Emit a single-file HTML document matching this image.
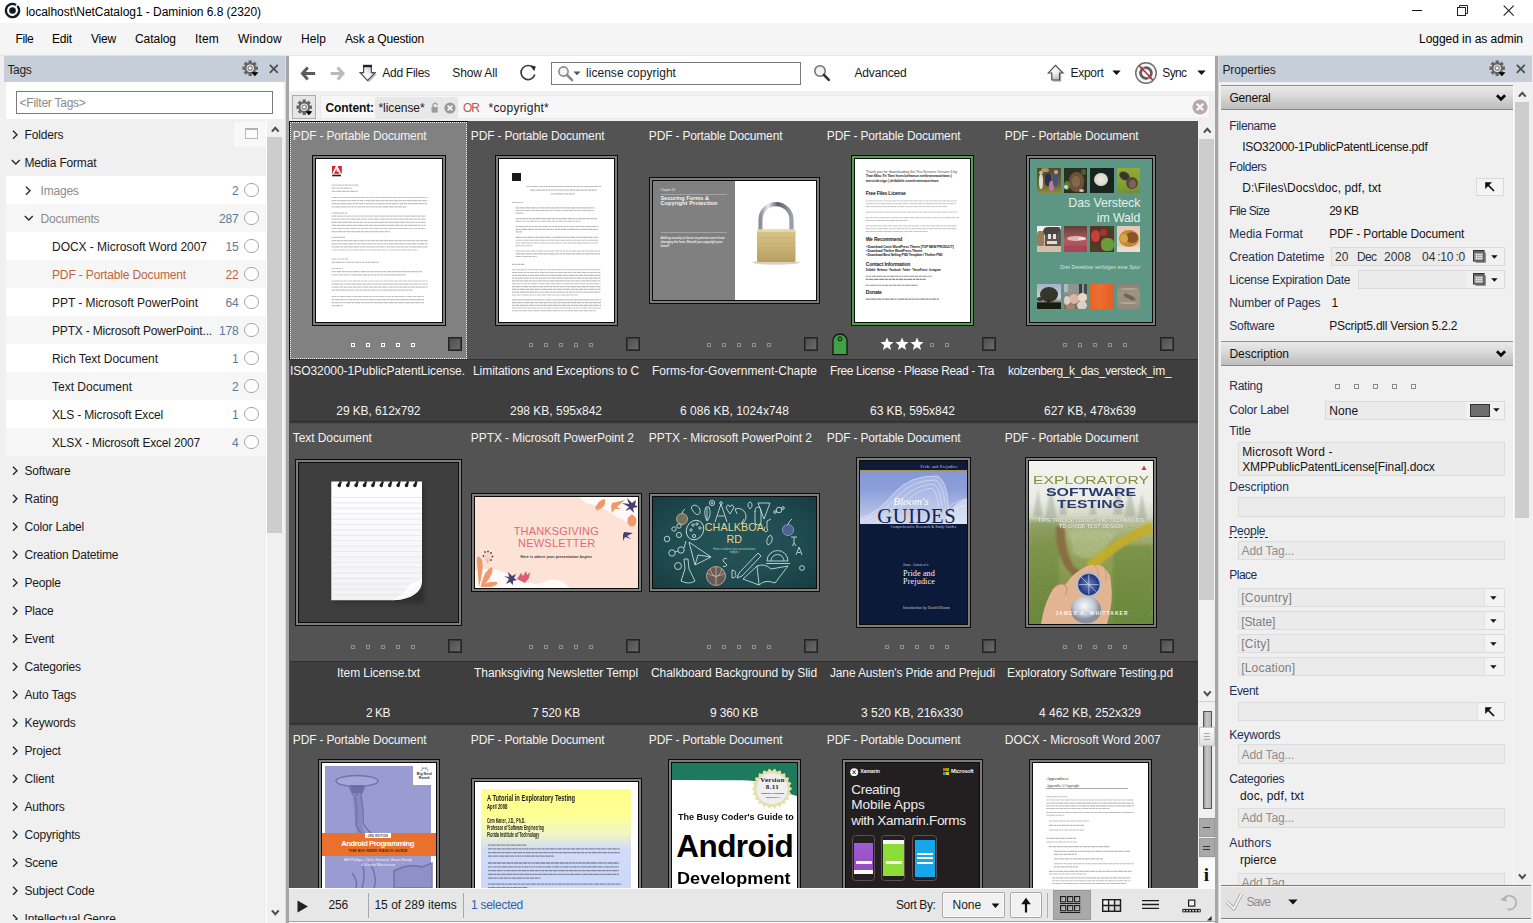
<!DOCTYPE html><html><head><meta charset="utf-8"><title>Daminion</title><style>

html,body{margin:0;padding:0;}
body{width:1533px;height:923px;overflow:hidden;background:#f0f0f0;font-family:"Liberation Sans",sans-serif;font-size:12px;position:relative;}
div,span,svg{position:absolute;box-sizing:border-box;}
.t{white-space:pre;}
.clip{overflow:hidden;}

</style></head><body>
<div style="left:0px;top:0px;width:1533px;height:23px;background:#ffffff;"></div>
<svg style="left:3.4px;top:1.3px;" width="19" height="19" viewBox="0 0 19 19"><path d="M14.91 5.71A6.6 6.6 0 1 1 12.29 3.52" fill="none" stroke="#0f1b28" stroke-width="2.3" stroke-linecap="round"/><circle cx="9.5" cy="9.5" r="3.3" fill="#0f1b28"/></svg>
<span class="t" style="left:26.00px;top:6.00px;font-size:12px;line-height:12px;color:#000;letter-spacing:-0.042px;">localhost\NetCatalog1 - Daminion 6.8 (2320)</span>
<div style="left:1412px;top:10px;width:10px;height:1px;background:#111;"></div>
<svg style="left:1456.5px;top:4.5px;" width="12" height="12" viewBox="0 0 12 12"><rect x="0.5" y="2.5" width="8" height="8" fill="none" stroke="#222" stroke-width="1"/><path d="M2.5 2.5V0.5H10.5V8.5H8.5" fill="none" stroke="#222" stroke-width="1"/></svg>
<svg style="left:1502.5px;top:4.5px;" width="12" height="12" viewBox="0 0 12 12"><path d="M0.7 0.7L10.7 10.7M10.7 0.7L0.7 10.7" stroke="#222" stroke-width="1.1" fill="none"/></svg>
<div style="left:0px;top:23px;width:1533px;height:33px;background:#f5f5f5;"></div>
<div style="left:0px;top:53px;width:1533px;height:2px;background:#f3f3f3;"></div>
<div style="left:0px;top:55px;width:1533px;height:1px;background:#e8e8e8;"></div>
<span class="t" style="left:15.40px;top:33.00px;font-size:12px;line-height:12px;color:#000;letter-spacing:-0.336px;">File</span>
<span class="t" style="left:52.00px;top:33.00px;font-size:12px;line-height:12px;color:#000;letter-spacing:-0.172px;">Edit</span>
<span class="t" style="left:91.00px;top:33.00px;font-size:12px;line-height:12px;color:#000;letter-spacing:-0.199px;">View</span>
<span class="t" style="left:135.00px;top:33.00px;font-size:12px;line-height:12px;color:#000;letter-spacing:-0.054px;">Catalog</span>
<span class="t" style="left:195.00px;top:33.00px;font-size:12px;line-height:12px;color:#000;letter-spacing:0.164px;">Item</span>
<span class="t" style="left:238.00px;top:33.00px;font-size:12px;line-height:12px;color:#000;letter-spacing:0.219px;">Window</span>
<span class="t" style="left:301.00px;top:33.00px;font-size:12px;line-height:12px;color:#000;letter-spacing:0.078px;">Help</span>
<span class="t" style="left:345.00px;top:33.00px;font-size:12px;line-height:12px;color:#000;letter-spacing:-0.170px;">Ask a Question</span>
<span class="t" style="left:1419.00px;top:33.00px;font-size:12px;line-height:12px;color:#000;letter-spacing:-0.042px;">Logged in as admin</span>
<div style="left:0px;top:56px;width:289px;height:867px;background:#f0f0f0;"></div>
<div style="left:4px;top:55px;width:281px;height:1px;background:#dfe3e9;"></div>
<div style="left:4px;top:56px;width:281px;height:26px;background:#c5ced9;"></div>
<span class="t" style="left:7.40px;top:64.00px;font-size:12px;line-height:12px;color:#1e1e1e;letter-spacing:-0.340px;">Tags</span>
<svg style="left:242px;top:59.5px;" width="17" height="17" viewBox="0 0 17 17"><path d="M6.55 3.06L6.51 0.48L9.89 0.48L9.85 3.06L10.67 3.40L12.47 1.55L14.85 3.93L13.00 5.73L13.34 6.55L15.92 6.51L15.92 9.89L13.34 9.85L13.00 10.67L14.85 12.47L12.47 14.85L10.67 13.00L9.85 13.34L9.89 15.92L6.51 15.92L6.55 13.34L5.73 13.00L3.93 14.85L1.55 12.47L3.40 10.67L3.06 9.85L0.48 9.89L0.48 6.51L3.06 6.55L3.40 5.73L1.55 3.93L3.93 1.55L5.73 3.40Z" fill="#666"/><circle cx="8.2" cy="8.2" r="5.7" fill="#666"/><circle cx="8.2" cy="8.2" r="3.7" fill="#eeeeee"/><circle cx="8.2" cy="8.2" r="2.7" fill="#8a8a8a"/><circle cx="8.2" cy="8.2" r="1.4" fill="#f8f8f8"/><path d="M9.3 12.3h7.2l-3.6 3.9z" fill="#000"/></svg>
<svg style="left:269px;top:64px;" width="10" height="10" viewBox="0 0 10 10"><path d="M0.8 0.8L8.8 8.8M8.8 0.8L0.8 8.8" stroke="#4c4c4c" stroke-width="1.7" fill="none"/></svg>
<div style="left:6px;top:82px;width:278px;height:37px;background:#ffffff;"></div>
<div style="left:16px;top:91px;width:257px;height:23px;background:#ffffff;border:1px solid #7a7a7a;"></div>
<span class="t" style="left:19.60px;top:97.00px;font-size:12px;line-height:12px;color:#8a8a8a;letter-spacing:-0.243px;">&lt;Filter Tags&gt;</span>
<div class="clip" style="left:0px;top:119px;width:285px;height:804px;">
<div style="left:6px;top:0px;width:260px;height:804px;background:#f0f0f0;"></div>
<div style="left:6px;top:57px;width:260px;height:28px;background:#ffffff;"></div>
<div style="left:6px;top:85px;width:260px;height:28px;background:#f6f6f6;"></div>
<div style="left:6px;top:113px;width:260px;height:28px;background:#ffffff;"></div>
<div style="left:6px;top:141px;width:260px;height:28px;background:#f6f6f6;"></div>
<div style="left:6px;top:169px;width:260px;height:28px;background:#ffffff;"></div>
<div style="left:6px;top:197px;width:260px;height:28px;background:#f6f6f6;"></div>
<div style="left:6px;top:225px;width:260px;height:28px;background:#ffffff;"></div>
<div style="left:6px;top:253px;width:260px;height:28px;background:#f6f6f6;"></div>
<div style="left:6px;top:281px;width:260px;height:28px;background:#ffffff;"></div>
<div style="left:6px;top:309px;width:260px;height:28px;background:#f6f6f6;"></div>
<div style="left:234px;top:3px;width:32px;height:25px;background:#f8f8f8;"></div>
<div style="left:245px;top:9px;width:13px;height:11px;background:#fbfbfb;border:1px solid #b8b8b8;border-top:2px solid #b4b4b4;"></div>
<svg style="left:11.5px;top:11.199999999999989px;" width="6" height="10" viewBox="0 0 6 10"><path d="M1 0.8L5 4.8L1 8.8" fill="none" stroke="#2a2a2a" stroke-width="1.4"/></svg>
<span class="t" style="left:24.50px;top:10.00px;font-size:12px;line-height:12px;color:#1a1a1a;letter-spacing:-0.171px;">Folders</span>
<svg style="left:10.5px;top:40.0px;" width="10" height="6" viewBox="0 0 10 6"><path d="M0.8 1L4.8 5L8.8 1" fill="none" stroke="#2a2a2a" stroke-width="1.4"/></svg>
<span class="t" style="left:24.50px;top:38.00px;font-size:12px;line-height:12px;color:#1a1a1a;letter-spacing:-0.185px;">Media Format</span>
<svg style="left:11.5px;top:347.2px;" width="6" height="10" viewBox="0 0 6 10"><path d="M1 0.8L5 4.8L1 8.8" fill="none" stroke="#2a2a2a" stroke-width="1.4"/></svg>
<span class="t" style="left:24.50px;top:346.00px;font-size:12px;line-height:12px;color:#1a1a1a;letter-spacing:-0.178px;">Software</span>
<svg style="left:11.5px;top:375.2px;" width="6" height="10" viewBox="0 0 6 10"><path d="M1 0.8L5 4.8L1 8.8" fill="none" stroke="#2a2a2a" stroke-width="1.4"/></svg>
<span class="t" style="left:24.50px;top:374.00px;font-size:12px;line-height:12px;color:#1a1a1a;letter-spacing:-0.173px;">Rating</span>
<svg style="left:11.5px;top:403.20000000000005px;" width="6" height="10" viewBox="0 0 6 10"><path d="M1 0.8L5 4.8L1 8.8" fill="none" stroke="#2a2a2a" stroke-width="1.4"/></svg>
<span class="t" style="left:24.50px;top:402.00px;font-size:12px;line-height:12px;color:#1a1a1a;letter-spacing:-0.167px;">Color Label</span>
<svg style="left:11.5px;top:431.20000000000005px;" width="6" height="10" viewBox="0 0 6 10"><path d="M1 0.8L5 4.8L1 8.8" fill="none" stroke="#2a2a2a" stroke-width="1.4"/></svg>
<span class="t" style="left:24.50px;top:430.00px;font-size:12px;line-height:12px;color:#1a1a1a;letter-spacing:-0.171px;">Creation Datetime</span>
<svg style="left:11.5px;top:459.20000000000005px;" width="6" height="10" viewBox="0 0 6 10"><path d="M1 0.8L5 4.8L1 8.8" fill="none" stroke="#2a2a2a" stroke-width="1.4"/></svg>
<span class="t" style="left:24.50px;top:458.00px;font-size:12px;line-height:12px;color:#1a1a1a;letter-spacing:-0.187px;">People</span>
<svg style="left:11.5px;top:487.20000000000005px;" width="6" height="10" viewBox="0 0 6 10"><path d="M1 0.8L5 4.8L1 8.8" fill="none" stroke="#2a2a2a" stroke-width="1.4"/></svg>
<span class="t" style="left:24.50px;top:486.00px;font-size:12px;line-height:12px;color:#1a1a1a;letter-spacing:-0.180px;">Place</span>
<svg style="left:11.5px;top:515.2px;" width="6" height="10" viewBox="0 0 6 10"><path d="M1 0.8L5 4.8L1 8.8" fill="none" stroke="#2a2a2a" stroke-width="1.4"/></svg>
<span class="t" style="left:24.50px;top:514.00px;font-size:12px;line-height:12px;color:#1a1a1a;letter-spacing:-0.184px;">Event</span>
<svg style="left:11.5px;top:543.2px;" width="6" height="10" viewBox="0 0 6 10"><path d="M1 0.8L5 4.8L1 8.8" fill="none" stroke="#2a2a2a" stroke-width="1.4"/></svg>
<span class="t" style="left:24.50px;top:542.00px;font-size:12px;line-height:12px;color:#1a1a1a;letter-spacing:-0.174px;">Categories</span>
<svg style="left:11.5px;top:571.2px;" width="6" height="10" viewBox="0 0 6 10"><path d="M1 0.8L5 4.8L1 8.8" fill="none" stroke="#2a2a2a" stroke-width="1.4"/></svg>
<span class="t" style="left:24.50px;top:570.00px;font-size:12px;line-height:12px;color:#1a1a1a;letter-spacing:-0.177px;">Auto Tags</span>
<svg style="left:11.5px;top:599.2px;" width="6" height="10" viewBox="0 0 6 10"><path d="M1 0.8L5 4.8L1 8.8" fill="none" stroke="#2a2a2a" stroke-width="1.4"/></svg>
<span class="t" style="left:24.50px;top:598.00px;font-size:12px;line-height:12px;color:#1a1a1a;letter-spacing:-0.198px;">Keywords</span>
<svg style="left:11.5px;top:627.2px;" width="6" height="10" viewBox="0 0 6 10"><path d="M1 0.8L5 4.8L1 8.8" fill="none" stroke="#2a2a2a" stroke-width="1.4"/></svg>
<span class="t" style="left:24.50px;top:626.00px;font-size:12px;line-height:12px;color:#1a1a1a;letter-spacing:-0.160px;">Project</span>
<svg style="left:11.5px;top:655.2px;" width="6" height="10" viewBox="0 0 6 10"><path d="M1 0.8L5 4.8L1 8.8" fill="none" stroke="#2a2a2a" stroke-width="1.4"/></svg>
<span class="t" style="left:24.50px;top:654.00px;font-size:12px;line-height:12px;color:#1a1a1a;letter-spacing:-0.153px;">Client</span>
<svg style="left:11.5px;top:683.2px;" width="6" height="10" viewBox="0 0 6 10"><path d="M1 0.8L5 4.8L1 8.8" fill="none" stroke="#2a2a2a" stroke-width="1.4"/></svg>
<span class="t" style="left:24.50px;top:682.00px;font-size:12px;line-height:12px;color:#1a1a1a;letter-spacing:-0.177px;">Authors</span>
<svg style="left:11.5px;top:711.2px;" width="6" height="10" viewBox="0 0 6 10"><path d="M1 0.8L5 4.8L1 8.8" fill="none" stroke="#2a2a2a" stroke-width="1.4"/></svg>
<span class="t" style="left:24.50px;top:710.00px;font-size:12px;line-height:12px;color:#1a1a1a;letter-spacing:-0.172px;">Copyrights</span>
<svg style="left:11.5px;top:739.2px;" width="6" height="10" viewBox="0 0 6 10"><path d="M1 0.8L5 4.8L1 8.8" fill="none" stroke="#2a2a2a" stroke-width="1.4"/></svg>
<span class="t" style="left:24.50px;top:738.00px;font-size:12px;line-height:12px;color:#1a1a1a;letter-spacing:-0.204px;">Scene</span>
<svg style="left:11.5px;top:767.2px;" width="6" height="10" viewBox="0 0 6 10"><path d="M1 0.8L5 4.8L1 8.8" fill="none" stroke="#2a2a2a" stroke-width="1.4"/></svg>
<span class="t" style="left:24.50px;top:766.00px;font-size:12px;line-height:12px;color:#1a1a1a;letter-spacing:-0.180px;">Subject Code</span>
<svg style="left:11.5px;top:795.2px;" width="6" height="10" viewBox="0 0 6 10"><path d="M1 0.8L5 4.8L1 8.8" fill="none" stroke="#2a2a2a" stroke-width="1.4"/></svg>
<span class="t" style="left:24.50px;top:794.00px;font-size:12px;line-height:12px;color:#1a1a1a;letter-spacing:-0.157px;">Intellectual Genre</span>
<svg style="left:25.0px;top:67.19999999999999px;" width="6" height="10" viewBox="0 0 6 10"><path d="M1 0.8L5 4.8L1 8.8" fill="none" stroke="#2a2a2a" stroke-width="1.4"/></svg>
<span class="t" style="left:40.50px;top:66.00px;font-size:12px;line-height:12px;color:#8c8c8c;letter-spacing:-0.197px;">Images</span>
<span class="t" style="left:232.01px;top:66.00px;font-size:12px;line-height:12px;color:#5d7a96;letter-spacing:-0.201px;">2</span>
<svg style="left:24.0px;top:96.0px;" width="10" height="6" viewBox="0 0 10 6"><path d="M0.8 1L4.8 5L8.8 1" fill="none" stroke="#2a2a2a" stroke-width="1.4"/></svg>
<span class="t" style="left:40.50px;top:94.00px;font-size:12px;line-height:12px;color:#8c8c8c;letter-spacing:-0.202px;">Documents</span>
<span class="t" style="left:219.07px;top:94.00px;font-size:12px;line-height:12px;color:#5d7a96;letter-spacing:-0.200px;">287</span>
<span class="t" style="left:52.00px;top:122.00px;font-size:12px;line-height:12px;color:#1a1a1a;letter-spacing:-0.032px;">DOCX - Microsoft Word 2007</span>
<span class="t" style="left:225.54px;top:122.00px;font-size:12px;line-height:12px;color:#5d7a96;letter-spacing:-0.200px;">15</span>
<span class="t" style="left:52.00px;top:150.00px;font-size:12px;line-height:12px;color:#c0643c;letter-spacing:-0.147px;">PDF - Portable Document</span>
<span class="t" style="left:225.54px;top:150.00px;font-size:12px;line-height:12px;color:#c0643c;letter-spacing:-0.200px;">22</span>
<span class="t" style="left:52.00px;top:178.00px;font-size:12px;line-height:12px;color:#1a1a1a;letter-spacing:-0.045px;">PPT - Microsoft PowerPoint</span>
<span class="t" style="left:225.54px;top:178.00px;font-size:12px;line-height:12px;color:#5d7a96;letter-spacing:-0.200px;">64</span>
<span class="t" style="left:52.00px;top:206.00px;font-size:12px;line-height:12px;color:#1a1a1a;letter-spacing:-0.180px;">PPTX - Microsoft PowerPoint...</span>
<span class="t" style="left:219.07px;top:206.00px;font-size:12px;line-height:12px;color:#5d7a96;letter-spacing:-0.200px;">178</span>
<span class="t" style="left:52.00px;top:234.00px;font-size:12px;line-height:12px;color:#1a1a1a;letter-spacing:-0.064px;">Rich Text Document</span>
<span class="t" style="left:232.01px;top:234.00px;font-size:12px;line-height:12px;color:#5d7a96;letter-spacing:-0.201px;">1</span>
<span class="t" style="left:52.00px;top:262.00px;font-size:12px;line-height:12px;color:#1a1a1a;letter-spacing:-0.004px;">Text Document</span>
<span class="t" style="left:232.01px;top:262.00px;font-size:12px;line-height:12px;color:#5d7a96;letter-spacing:-0.201px;">2</span>
<span class="t" style="left:52.00px;top:290.00px;font-size:12px;line-height:12px;color:#1a1a1a;letter-spacing:-0.176px;">XLS - Microsoft Excel</span>
<span class="t" style="left:232.01px;top:290.00px;font-size:12px;line-height:12px;color:#5d7a96;letter-spacing:-0.201px;">1</span>
<span class="t" style="left:52.00px;top:318.00px;font-size:12px;line-height:12px;color:#1a1a1a;letter-spacing:-0.175px;">XLSX - Microsoft Excel 2007</span>
<span class="t" style="left:232.01px;top:318.00px;font-size:12px;line-height:12px;color:#5d7a96;letter-spacing:-0.201px;">4</span>
<div style="left:244.3px;top:63.5px;width:14.5px;height:14.5px;border:1px solid #a8a8a8;border-radius:50%;background:#fdfdfd;"></div>
<div style="left:244.3px;top:91.5px;width:14.5px;height:14.5px;border:1px solid #a8a8a8;border-radius:50%;background:#fdfdfd;"></div>
<div style="left:244.3px;top:119.5px;width:14.5px;height:14.5px;border:1px solid #a8a8a8;border-radius:50%;background:#fdfdfd;"></div>
<div style="left:244.3px;top:147.5px;width:14.5px;height:14.5px;border:1px solid #a8a8a8;border-radius:50%;background:#fdfdfd;"></div>
<div style="left:244.3px;top:175.5px;width:14.5px;height:14.5px;border:1px solid #a8a8a8;border-radius:50%;background:#fdfdfd;"></div>
<div style="left:244.3px;top:203.5px;width:14.5px;height:14.5px;border:1px solid #a8a8a8;border-radius:50%;background:#fdfdfd;"></div>
<div style="left:244.3px;top:231.5px;width:14.5px;height:14.5px;border:1px solid #a8a8a8;border-radius:50%;background:#fdfdfd;"></div>
<div style="left:244.3px;top:259.5px;width:14.5px;height:14.5px;border:1px solid #a8a8a8;border-radius:50%;background:#fdfdfd;"></div>
<div style="left:244.3px;top:287.5px;width:14.5px;height:14.5px;border:1px solid #a8a8a8;border-radius:50%;background:#fdfdfd;"></div>
<div style="left:244.3px;top:315.5px;width:14.5px;height:14.5px;border:1px solid #a8a8a8;border-radius:50%;background:#fdfdfd;"></div>
</div>
<div style="left:0px;top:920px;width:266px;height:3px;background:#f0f0f0;"></div>
<div style="left:266px;top:119px;width:1px;height:804px;background:#ffffff;"></div>
<div style="left:267px;top:119px;width:18px;height:804px;background:#f0f0f0;"></div>
<div style="left:267px;top:137px;width:15px;height:396px;background:#cdcdcd;"></div>
<svg style="left:270.5px;top:125.5px;" width="9" height="7" viewBox="0 0 9 7"><path d="M0.9 5.6L4.3 1.8L7.7 5.6" fill="none" stroke="#4c4c4c" stroke-width="2"/></svg>
<svg style="left:270.5px;top:908.5px;" width="9" height="7" viewBox="0 0 9 7"><path d="M0.9 1.4L4.3 5.2L7.7 1.4" fill="none" stroke="#4c4c4c" stroke-width="2"/></svg>
<div style="left:285px;top:56px;width:4px;height:867px;background:#a6a6a6;"></div>
<div style="left:285px;top:56px;width:1px;height:867px;background:#dcdcdc;"></div>
<div style="left:289px;top:56px;width:926px;height:35px;background:#ffffff;"></div>
<svg style="left:300px;top:66px;" width="16" height="15" viewBox="0 0 16 15"><path d="M7.8 1.6L2.4 7.5L7.8 13.4M2.6 7.5H15.2" fill="none" stroke="#5c5c5c" stroke-width="3"/></svg>
<svg style="left:329.5px;top:66px;" width="16" height="15" viewBox="0 0 16 15"><path d="M7.6 1.6L13 7.5L7.6 13.4M12.8 7.5H0.6" fill="none" stroke="#bababa" stroke-width="3"/></svg>
<svg style="left:359px;top:64px;" width="18" height="19" viewBox="0 0 18 19"><defs><linearGradient id="af" x1="1" y1="0" x2="0.2" y2="1"><stop offset="0" stop-color="#b4b4b4"/><stop offset="0.55" stop-color="#f4f4f4"/><stop offset="1" stop-color="#ffffff"/></linearGradient></defs><path d="M9.6 17.6L17 9.6" stroke="#bbb" stroke-width="1.6" fill="none"/><path d="M5 1.8H12.4V8.6H16L8.6 16.6L1.2 8.6H4.6V1.8Z" fill="url(#af)" stroke="#4a4a4a" stroke-width="1.2"/><rect x="4" y="0.8" width="9" height="2.4" fill="#222"/></svg>
<span class="t" style="left:382.30px;top:67.00px;font-size:12px;line-height:12px;color:#1a1a1a;letter-spacing:-0.281px;">Add Files</span>
<span class="t" style="left:452.30px;top:67.00px;font-size:12px;line-height:12px;color:#1a1a1a;letter-spacing:-0.129px;">Show All</span>
<svg style="left:519px;top:63px;" width="19" height="19" viewBox="0 0 19 19"><path d="M14.6 5.2A7 7 0 1 0 15.8 11.5" fill="none" stroke="#3c3c3c" stroke-width="1.7"/><path d="M11.2 2.2L16.8 3.4L15.2 8.2Z" fill="#2a2a2a"/></svg>
<div style="left:551px;top:62px;width:250px;height:23px;background:#ffffff;border:1px solid #7a7a7a;"></div>
<svg style="left:557px;top:65px;" width="26" height="17" viewBox="0 0 26 17"><circle cx="6.5" cy="6.5" r="4.6" fill="#f4f4f4" stroke="#8a8a8a" stroke-width="1.6"/><path d="M10 10L15 15" stroke="#8a8a8a" stroke-width="2.6" stroke-linecap="round"/><path d="M16.5 6.5h7l-3.5 3.8z" fill="#555"/></svg>
<span class="t" style="left:586.00px;top:67.00px;font-size:12px;line-height:12px;color:#1a1a1a;letter-spacing:0.036px;">license copyright</span>
<svg style="left:813px;top:64px;" width="18" height="18" viewBox="0 0 18 18"><circle cx="7" cy="7" r="5.2" fill="#f2f2f2" stroke="#6e6e6e" stroke-width="1.5"/><path d="M11 11L15.8 15.8" stroke="#333" stroke-width="2.6" stroke-linecap="round"/></svg>
<span class="t" style="left:854.50px;top:67.00px;font-size:12px;line-height:12px;color:#1a1a1a;letter-spacing:-0.172px;">Advanced</span>
<svg style="left:1047px;top:64px;" width="19" height="19" viewBox="0 0 19 19"><defs><linearGradient id="ex" x1="0.3" y1="0" x2="0.8" y2="1"><stop offset="0" stop-color="#ffffff"/><stop offset="0.5" stop-color="#f0f0f0"/><stop offset="1" stop-color="#a8a8a8"/></linearGradient></defs><path d="M13.6 9.8V17H6" stroke="#bbb" stroke-width="1.4" fill="none"/><path d="M8.5 1.4L16 9H12.6V16H4.8V9H1.2Z" fill="url(#ex)" stroke="#4a4a4a" stroke-width="1.2"/></svg>
<span class="t" style="left:1070.50px;top:67.00px;font-size:12px;line-height:12px;color:#1a1a1a;letter-spacing:-0.281px;">Export</span>
<svg style="left:1112px;top:70px;" width="9" height="6" viewBox="0 0 9 6"><path d="M0.3 0.5h8.4L4.5 5z" fill="#111"/></svg>
<svg style="left:1134px;top:61px;" width="24" height="24" viewBox="0 0 24 24"><circle cx="12" cy="12" r="10.3" fill="#f6f6f6" stroke="#6e6e6e" stroke-width="1.4"/><path d="M10.19 7.02A5.3 5.3 0 0 1 16.06 15.41" fill="none" stroke="#5c5c5c" stroke-width="2.7"/><path d="M13.81 16.98A5.3 5.3 0 0 1 7.94 8.59" fill="none" stroke="#5c5c5c" stroke-width="2.7"/><path d="M14.39 17.9L18.2 16.95L14.0 13.6Z M9.61 6.1L5.8 7.05L10.0 10.4Z" fill="#5c5c5c"/><path d="M5.2 4.6L19 19.2" stroke="#d61f3c" stroke-width="1.5"/></svg>
<span class="t" style="left:1162.30px;top:67.00px;font-size:12px;line-height:12px;color:#1a1a1a;letter-spacing:-0.672px;">Sync</span>
<svg style="left:1197px;top:70px;" width="9" height="6" viewBox="0 0 9 6"><path d="M0.3 0.5h8.4L4.5 5z" fill="#111"/></svg>
<div style="left:289px;top:91px;width:926px;height:30px;background:#f0f0f0;"></div>
<div style="left:292px;top:95px;width:24px;height:24px;background:#e6e6e6;border:1px solid #adadad;"></div>
<svg style="left:295.7px;top:98.9px;" width="17" height="17" viewBox="0 0 17 17"><path d="M6.55 3.06L6.51 0.48L9.89 0.48L9.85 3.06L10.67 3.40L12.47 1.55L14.85 3.93L13.00 5.73L13.34 6.55L15.92 6.51L15.92 9.89L13.34 9.85L13.00 10.67L14.85 12.47L12.47 14.85L10.67 13.00L9.85 13.34L9.89 15.92L6.51 15.92L6.55 13.34L5.73 13.00L3.93 14.85L1.55 12.47L3.40 10.67L3.06 9.85L0.48 9.89L0.48 6.51L3.06 6.55L3.40 5.73L1.55 3.93L3.93 1.55L5.73 3.40Z" fill="#666"/><circle cx="8.2" cy="8.2" r="5.7" fill="#666"/><circle cx="8.2" cy="8.2" r="3.7" fill="#eeeeee"/><circle cx="8.2" cy="8.2" r="2.7" fill="#8a8a8a"/><circle cx="8.2" cy="8.2" r="1.4" fill="#f8f8f8"/><path d="M9.3 12.3h7.2l-3.6 3.9z" fill="#000"/></svg>
<div style="left:320px;top:95px;width:890px;height:24px;background:#f7f7f7;border:1px solid #e9e9e9;"></div>
<div style="left:375px;top:97px;width:83px;height:21px;background:#e8e8e8;border-radius:2px;"></div>
<span class="t" style="left:325.50px;top:102.00px;font-size:12px;line-height:12px;color:#111;font-weight:700;letter-spacing:-0.104px;">Content:</span>
<span class="t" style="left:378.50px;top:102.00px;font-size:12px;line-height:12px;color:#1a1a1a;letter-spacing:-0.078px;">*license*</span>
<svg style="left:431px;top:102px;" width="8" height="11" viewBox="0 0 8 11"><path d="M2 5V3.2A2.1 2.1 0 0 1 6.2 3.2" fill="none" stroke="#a0a0a0" stroke-width="1.3"/><rect x="0.5" y="5" width="6.2" height="5.6" fill="#9c9c9c"/></svg>
<svg style="left:444px;top:102px;" width="12" height="12" viewBox="0 0 12 12"><circle cx="6" cy="6" r="5.6" fill="#9a9a9a"/><path d="M3.6 3.6L8.4 8.4M8.4 3.6L3.6 8.4" stroke="#f4f4f4" stroke-width="1.7"/></svg>
<span class="t" style="left:463.00px;top:102.00px;font-size:12px;line-height:12px;color:#b25a50;letter-spacing:-1.000px;">OR</span>
<span class="t" style="left:488.50px;top:102.00px;font-size:12px;line-height:12px;color:#1a1a1a;letter-spacing:0.224px;">*copyright*</span>
<svg style="left:1192px;top:99px;" width="16" height="16" viewBox="0 0 16 16"><circle cx="8" cy="8" r="7.6" fill="#b9a9ab"/><path d="M4.8 4.8L11.2 11.2M11.2 4.8L4.8 11.2" stroke="#fbf6f6" stroke-width="2.3"/></svg>
<div style="left:289px;top:888px;width:926px;height:35px;background:#e7e7e7;"></div>
<div style="left:289px;top:888px;width:926px;height:1px;background:#fbfbfb;"></div>
<div style="left:289px;top:921px;width:926px;height:1px;background:#a4a4a4;"></div>
<div style="left:289px;top:922px;width:926px;height:1px;background:#fcfcfc;"></div>
<svg style="left:297px;top:900px;" width="12" height="13" viewBox="0 0 12 13"><path d="M0.5 0.5L11 6.5L0.5 12.5Z" fill="#222"/></svg>
<span class="t" style="left:328.40px;top:899.00px;font-size:12px;line-height:12px;color:#1a1a1a;letter-spacing:-0.077px;">256</span>
<div style="left:368px;top:893px;width:1px;height:25px;background:#a8a8a8;"></div>
<span class="t" style="left:374.40px;top:899.00px;font-size:12px;line-height:12px;color:#1a1a1a;letter-spacing:0.023px;">15 of 289 items</span>
<div style="left:463px;top:893px;width:1px;height:25px;background:#a8a8a8;"></div>
<span class="t" style="left:471.00px;top:899.00px;font-size:12px;line-height:12px;color:#2c64ac;letter-spacing:-0.270px;">1 selected</span>
<span class="t" style="left:896.00px;top:899.00px;font-size:12px;line-height:12px;color:#1a1a1a;letter-spacing:-0.398px;">Sort By:</span>
<div style="left:942px;top:892px;width:63px;height:26px;background:#f1f1f1;border:1px solid #a8a8a8;border-radius:2px;box-shadow:inset 0 0 0 1px #fafafa;"></div>
<span class="t" style="left:952.60px;top:899.00px;font-size:12px;line-height:12px;color:#1a1a1a;letter-spacing:-0.047px;">None</span>
<svg style="left:991px;top:903px;" width="9" height="6" viewBox="0 0 9 6"><path d="M0.6 0.5h7.8L4.5 5z" fill="#111"/></svg>
<div style="left:1010px;top:892px;width:32px;height:26px;background:#f1f1f1;border:1px solid #a8a8a8;border-radius:2px;box-shadow:inset 0 0 0 1px #fafafa;"></div>
<svg style="left:1020px;top:897px;" width="12" height="17" viewBox="0 0 12 17"><path d="M6 15.5V4" stroke="#111" stroke-width="2.2"/><path d="M1.2 7.2L6 0.8L10.8 7.2Z" fill="#111"/></svg>
<div style="left:1046.5px;top:893px;width:1px;height:25px;background:#b0b0b0;"></div>
<div style="left:1053px;top:890px;width:38px;height:30px;background:#a9a9a9;border:1px solid #9a9a9a;"></div>
<svg style="left:1060px;top:896px;" width="21" height="18" viewBox="0 0 21 18"><defs><linearGradient id="gq" x1="0" y1="0" x2="1" y2="1"><stop offset="0" stop-color="#7a7a7a"/><stop offset="1" stop-color="#d8d8d8"/></linearGradient></defs><rect x="0.5" y="0.5" width="5.2" height="5.2" fill="url(#gq)" stroke="#1c1c1c" stroke-width="1"/><rect x="7.5" y="0.5" width="5.2" height="5.2" fill="url(#gq)" stroke="#1c1c1c" stroke-width="1"/><rect x="14.5" y="0.5" width="5.2" height="5.2" fill="url(#gq)" stroke="#1c1c1c" stroke-width="1"/><rect x="0" y="7" width="20.2" height="1" fill="#1c1c1c"/><rect x="0.5" y="9.5" width="5.2" height="5.2" fill="url(#gq)" stroke="#1c1c1c" stroke-width="1"/><rect x="7.5" y="9.5" width="5.2" height="5.2" fill="url(#gq)" stroke="#1c1c1c" stroke-width="1"/><rect x="14.5" y="9.5" width="5.2" height="5.2" fill="url(#gq)" stroke="#1c1c1c" stroke-width="1"/><rect x="0" y="16" width="20.2" height="1" fill="#1c1c1c"/></svg>
<svg style="left:1102px;top:899px;" width="20" height="14" viewBox="0 0 20 14"><defs><linearGradient id="gq2" x1="0" y1="0" x2="1" y2="1"><stop offset="0" stop-color="#ffffff"/><stop offset="1" stop-color="#c8c8c8"/></linearGradient></defs><rect x="0.7" y="0.7" width="17.8" height="11.6" fill="url(#gq2)" stroke="#1c1c1c" stroke-width="1.4"/><path d="M0.7 6.5H18.5M6.6 0.7V12.3M12.6 0.7V12.3" stroke="#1c1c1c" stroke-width="1.4"/></svg>
<svg style="left:1142px;top:899px;" width="18" height="11" viewBox="0 0 18 11"><path d="M0 1.7H17M0 5.5H17M0 9.3H17" stroke="#1c1c1c" stroke-width="1.3"/></svg>
<svg style="left:1182px;top:898.5px;" width="20" height="14" viewBox="0 0 20 14"><rect x="6.6" y="1.1" width="6.2" height="6" fill="#f4f4f4" stroke="#1c1c1c" stroke-width="1.2"/><rect x="0.3" y="9.9" width="18.4" height="3.4" fill="#1c1c1c"/><rect x="1.3" y="10.9" width="1.6" height="1.5" fill="#f0f0f0"/><rect x="4.3" y="10.9" width="1.6" height="1.5" fill="#f0f0f0"/><rect x="7.3" y="10.9" width="1.6" height="1.5" fill="#f0f0f0"/><rect x="10.3" y="10.9" width="1.6" height="1.5" fill="#f0f0f0"/><rect x="13.3" y="10.9" width="1.6" height="1.5" fill="#f0f0f0"/><rect x="16.3" y="10.9" width="1.6" height="1.5" fill="#f0f0f0"/></svg>
<svg style="left:1207.3px;top:916px;" width="4.6" height="4.6" viewBox="0 0 4.6 4.6"><path d="M4.6 0V4.6H0Z" fill="#222"/></svg>
<div style="left:1215px;top:56px;width:4px;height:867px;background:#a6a6a6;"></div>
<div style="left:1218px;top:56px;width:1px;height:867px;background:#d8d8d8;"></div>
<div style="left:1219px;top:56px;width:314px;height:867px;background:#f0f0f0;"></div>
<div style="left:1219px;top:55px;width:313px;height:1px;background:#dfe3e9;"></div>
<div style="left:1219px;top:56px;width:313px;height:26px;background:#c5ced9;"></div>
<span class="t" style="left:1222.50px;top:64.00px;font-size:12px;line-height:12px;color:#1e1e1e;letter-spacing:-0.170px;">Properties</span>
<svg style="left:1488.8px;top:59.5px;" width="17" height="17" viewBox="0 0 17 17"><path d="M6.55 3.06L6.51 0.48L9.89 0.48L9.85 3.06L10.67 3.40L12.47 1.55L14.85 3.93L13.00 5.73L13.34 6.55L15.92 6.51L15.92 9.89L13.34 9.85L13.00 10.67L14.85 12.47L12.47 14.85L10.67 13.00L9.85 13.34L9.89 15.92L6.51 15.92L6.55 13.34L5.73 13.00L3.93 14.85L1.55 12.47L3.40 10.67L3.06 9.85L0.48 9.89L0.48 6.51L3.06 6.55L3.40 5.73L1.55 3.93L3.93 1.55L5.73 3.40Z" fill="#666"/><circle cx="8.2" cy="8.2" r="5.7" fill="#666"/><circle cx="8.2" cy="8.2" r="3.7" fill="#eeeeee"/><circle cx="8.2" cy="8.2" r="2.7" fill="#8a8a8a"/><circle cx="8.2" cy="8.2" r="1.4" fill="#f8f8f8"/><path d="M9.3 12.3h7.2l-3.6 3.9z" fill="#000"/></svg>
<svg style="left:1516px;top:64px;" width="10" height="10" viewBox="0 0 10 10"><path d="M0.8 0.8L8.8 8.8M8.8 0.8L0.8 8.8" stroke="#4c4c4c" stroke-width="1.7" fill="none"/></svg>
<div class="clip" style="left:1219px;top:82px;width:295px;height:803px;">
<div style="left:2px;top:3px;width:292px;height:25px;background:linear-gradient(#eaeaea,#d8d8d8 45%,#bcbcbc);border-top:1px solid #909090;border-bottom:1px solid #888;"></div>
<span class="t" style="left:10.50px;top:10.00px;font-size:12px;line-height:12px;color:#111;letter-spacing:-0.243px;">General</span>
<svg style="left:276.5999999999999px;top:12.200000000000003px;" width="10" height="8" viewBox="0 0 10 8"><path d="M0.9 1.3L5 5.3L9.1 1.3" fill="none" stroke="#0a0a0a" stroke-width="2.7"/></svg>
<span class="t" style="left:10.30px;top:38.00px;font-size:12px;line-height:12px;color:#1b2f55;letter-spacing:-0.357px;">Filename</span>
<span class="t" style="left:23.20px;top:59.00px;font-size:12px;line-height:12px;color:#141414;letter-spacing:-0.245px;">ISO32000-1PublicPatentLicense.pdf</span>
<span class="t" style="left:10.30px;top:79.00px;font-size:12px;line-height:12px;color:#1b2f55;letter-spacing:-0.431px;">Folders</span>
<span class="t" style="left:23.20px;top:100.00px;font-size:12px;line-height:12px;color:#141414;letter-spacing:0.084px;">D:\Files\Docs\doc, pdf, txt</span>
<div style="left:257px;top:96px;width:28px;height:18px;background:#f4f4f4;border:1px solid #d9d9d9;"></div>
<svg style="left:265px;top:99px;" width="11" height="11" viewBox="0 0 11 11"><path d="M2.2 2.2L10 10" stroke="#111" stroke-width="1.7"/><path d="M1.2 1.2H8L1.2 8Z" fill="#111"/></svg>
<span class="t" style="left:10.30px;top:123.00px;font-size:12px;line-height:12px;color:#1b2f55;letter-spacing:-0.668px;">File Size</span>
<span class="t" style="left:110.30px;top:123.00px;font-size:12px;line-height:12px;color:#141414;letter-spacing:-0.741px;">29 KB</span>
<span class="t" style="left:10.30px;top:146.00px;font-size:12px;line-height:12px;color:#1b2f55;letter-spacing:-0.044px;">Media Format</span>
<span class="t" style="left:110.30px;top:146.00px;font-size:12px;line-height:12px;color:#141414;letter-spacing:-0.104px;">PDF - Portable Document</span>
<span class="t" style="left:10.30px;top:169.00px;font-size:12px;line-height:12px;color:#1b2f55;letter-spacing:-0.101px;">Creation Datetime</span>
<div style="left:112px;top:164.5px;width:173.5px;height:19px;background:#ebebeb;border:1px solid #dadada;"></div>
<div style="left:246.5px;top:165.5px;width:38px;height:17px;background:#f1f1f1;"></div>
<svg style="left:254px;top:167.5px;" width="13" height="13" viewBox="0 0 13 13"><path d="M2.5 12.2H12.2V2.5" fill="none" stroke="#777" stroke-width="1.2"/><rect x="0.6" y="0.6" width="10.4" height="10.4" fill="#a2a2a2" stroke="#2c2c2c" stroke-width="1.1"/><rect x="1.2" y="1.2" width="9.2" height="1.6" fill="#5a5a5a"/><path d="M3 4.6h6.4M3 6.6h6.4M3 8.6h6.4" stroke="#f4f4f4" stroke-width="1.2" stroke-dasharray="1.4 0.8"/></svg>
<svg style="left:272px;top:172.5px;" width="7" height="4" viewBox="0 0 7 4"><path d="M0.2 0.3h6.4L3.4 3.8z" fill="#111"/></svg>
<span class="t" style="left:116.00px;top:169.00px;font-size:12px;line-height:12px;color:#333;letter-spacing:0.070px;">20</span>
<span class="t" style="left:138.00px;top:169.00px;font-size:12px;line-height:12px;color:#333;letter-spacing:-0.615px;">Dec</span>
<span class="t" style="left:165.00px;top:169.00px;font-size:12px;line-height:12px;color:#333;letter-spacing:0.074px;">2008</span>
<span class="t" style="left:203.00px;top:169.00px;font-size:12px;line-height:12px;color:#333;letter-spacing:0.070px;">04</span>
<span class="t" style="left:218.20px;top:169.00px;font-size:12px;line-height:12px;color:#333;letter-spacing:-0.229px;">:10</span>
<span class="t" style="left:236.50px;top:169.00px;font-size:12px;line-height:12px;color:#333;letter-spacing:-0.258px;">:0</span>
<span class="t" style="left:10.30px;top:192.00px;font-size:12px;line-height:12px;color:#1b2f55;letter-spacing:-0.250px;">License Expiration Date</span>
<div style="left:139px;top:187.5px;width:146.5px;height:19px;background:#ebebeb;border:1px solid #dadada;"></div>
<div style="left:246.5px;top:188.5px;width:38px;height:17px;background:#f1f1f1;"></div>
<svg style="left:254px;top:190.5px;" width="13" height="13" viewBox="0 0 13 13"><path d="M2.5 12.2H12.2V2.5" fill="none" stroke="#777" stroke-width="1.2"/><rect x="0.6" y="0.6" width="10.4" height="10.4" fill="#a2a2a2" stroke="#2c2c2c" stroke-width="1.1"/><rect x="1.2" y="1.2" width="9.2" height="1.6" fill="#5a5a5a"/><path d="M3 4.6h6.4M3 6.6h6.4M3 8.6h6.4" stroke="#f4f4f4" stroke-width="1.2" stroke-dasharray="1.4 0.8"/></svg>
<svg style="left:272px;top:195.5px;" width="7" height="4" viewBox="0 0 7 4"><path d="M0.2 0.3h6.4L3.4 3.8z" fill="#111"/></svg>
<span class="t" style="left:10.30px;top:215.00px;font-size:12px;line-height:12px;color:#1b2f55;letter-spacing:-0.159px;">Number of Pages</span>
<span class="t" style="left:112.60px;top:215.00px;font-size:12px;line-height:12px;color:#141414;letter-spacing:-1.688px;">1</span>
<span class="t" style="left:10.30px;top:238.00px;font-size:12px;line-height:12px;color:#1b2f55;letter-spacing:-0.295px;">Software</span>
<span class="t" style="left:110.30px;top:238.00px;font-size:12px;line-height:12px;color:#141414;letter-spacing:-0.234px;">PScript5.dll Version 5.2.2</span>
<div style="left:2px;top:259px;width:292px;height:25px;background:linear-gradient(#eaeaea,#d8d8d8 45%,#bcbcbc);border-top:1px solid #909090;border-bottom:1px solid #888;"></div>
<span class="t" style="left:10.50px;top:266.00px;font-size:12px;line-height:12px;color:#111;letter-spacing:-0.048px;">Description</span>
<svg style="left:276.5999999999999px;top:268.2px;" width="10" height="8" viewBox="0 0 10 8"><path d="M0.9 1.3L5 5.3L9.1 1.3" fill="none" stroke="#0a0a0a" stroke-width="2.7"/></svg>
<span class="t" style="left:10.30px;top:298.00px;font-size:12px;line-height:12px;color:#1b2f55;letter-spacing:-0.281px;">Rating</span>
<div style="left:115.79999999999995px;top:302px;width:5px;height:5px;background:#f4f4f4;border:1px solid #8a8a8a;"></div>
<div style="left:134.79999999999995px;top:302px;width:5px;height:5px;background:#f4f4f4;border:1px solid #8a8a8a;"></div>
<div style="left:153.79999999999995px;top:302px;width:5px;height:5px;background:#f4f4f4;border:1px solid #8a8a8a;"></div>
<div style="left:172.79999999999995px;top:302px;width:5px;height:5px;background:#f4f4f4;border:1px solid #8a8a8a;"></div>
<div style="left:191.79999999999995px;top:302px;width:5px;height:5px;background:#f4f4f4;border:1px solid #8a8a8a;"></div>
<span class="t" style="left:10.30px;top:322.00px;font-size:12px;line-height:12px;color:#1b2f55;letter-spacing:-0.170px;">Color Label</span>
<div style="left:106px;top:319px;width:179.5px;height:19px;background:#ebebeb;border:1px solid #dadada;"></div>
<div style="left:246.5px;top:320px;width:38px;height:17px;background:#f1f1f1;"></div>
<span class="t" style="left:110.30px;top:323.00px;font-size:12px;line-height:12px;color:#141414;letter-spacing:0.078px;">None</span>
<div style="left:251px;top:321.5px;width:20px;height:13.5px;background:#6e6e6e;border:1px solid #333;"></div>
<svg style="left:274px;top:326px;" width="7" height="4" viewBox="0 0 7 4"><path d="M0.2 0.3h6.4L3.4 3.8z" fill="#111"/></svg>
<span class="t" style="left:10.30px;top:343.00px;font-size:12px;line-height:12px;color:#1b2f55;letter-spacing:-0.147px;">Title</span>
<div style="left:18.5px;top:359.5px;width:267px;height:34px;background:#ebebeb;border:1px solid #dcdcdc;"></div>
<span class="t" style="left:23.20px;top:364.00px;font-size:12px;line-height:12px;color:#141414;letter-spacing:0.169px;">Microsoft Word -</span>
<span class="t" style="left:23.20px;top:379.00px;font-size:12px;line-height:12px;color:#141414;letter-spacing:-0.106px;">XMPPublicPatentLicense[Final].docx</span>
<span class="t" style="left:10.30px;top:399.00px;font-size:12px;line-height:12px;color:#1b2f55;letter-spacing:-0.048px;">Description</span>
<div style="left:18.5px;top:415.3px;width:267px;height:19.5px;background:#ebebeb;border:1px solid #dcdcdc;"></div>
<span class="t" style="left:10.30px;top:443.00px;font-size:12px;line-height:12px;color:#1b2f55;letter-spacing:-0.229px;">People</span>
<div style="left:10px;top:455px;width:39px;height:1px;border-top:1px dashed #1b2f55;"></div>
<div style="left:18.5px;top:458.5px;width:267px;height:19.5px;background:#ebebeb;border:1px solid #dcdcdc;"></div>
<span class="t" style="left:22.60px;top:463.00px;font-size:12px;line-height:12px;color:#8e8e8e;letter-spacing:-0.133px;">Add Tag...</span>
<span class="t" style="left:10.30px;top:487.00px;font-size:12px;line-height:12px;color:#1b2f55;letter-spacing:-0.506px;">Place</span>
<div style="left:18.5px;top:506px;width:267px;height:19px;background:#ebebeb;border:1px solid #dcdcdc;"></div>
<div style="left:264.5px;top:507px;width:20px;height:17px;background:#f3f3f3;border-left:1px solid #e0e0e0;"></div>
<svg style="left:270.5px;top:514px;" width="7" height="4" viewBox="0 0 7 4"><path d="M0.2 0.3h6.4L3.4 3.8z" fill="#111"/></svg>
<span class="t" style="left:22.20px;top:510.00px;font-size:12px;line-height:12px;color:#7e7e7e;letter-spacing:0.257px;">[Country]</span>
<div style="left:18.5px;top:529px;width:267px;height:19px;background:#ebebeb;border:1px solid #dcdcdc;"></div>
<div style="left:264.5px;top:530px;width:20px;height:17px;background:#f3f3f3;border-left:1px solid #e0e0e0;"></div>
<svg style="left:270.5px;top:537px;" width="7" height="4" viewBox="0 0 7 4"><path d="M0.2 0.3h6.4L3.4 3.8z" fill="#111"/></svg>
<span class="t" style="left:22.20px;top:534.00px;font-size:12px;line-height:12px;color:#7e7e7e;letter-spacing:-0.098px;">[State]</span>
<div style="left:18.5px;top:552px;width:267px;height:19px;background:#ebebeb;border:1px solid #dcdcdc;"></div>
<div style="left:264.5px;top:553px;width:20px;height:17px;background:#f3f3f3;border-left:1px solid #e0e0e0;"></div>
<svg style="left:270.5px;top:560px;" width="7" height="4" viewBox="0 0 7 4"><path d="M0.2 0.3h6.4L3.4 3.8z" fill="#111"/></svg>
<span class="t" style="left:22.20px;top:556.00px;font-size:12px;line-height:12px;color:#7e7e7e;letter-spacing:0.276px;">[City]</span>
<div style="left:18.5px;top:575px;width:267px;height:19px;background:#ebebeb;border:1px solid #dcdcdc;"></div>
<div style="left:264.5px;top:576px;width:20px;height:17px;background:#f3f3f3;border-left:1px solid #e0e0e0;"></div>
<svg style="left:270.5px;top:583px;" width="7" height="4" viewBox="0 0 7 4"><path d="M0.2 0.3h6.4L3.4 3.8z" fill="#111"/></svg>
<span class="t" style="left:22.20px;top:580.00px;font-size:12px;line-height:12px;color:#7e7e7e;letter-spacing:0.195px;">[Location]</span>
<span class="t" style="left:10.30px;top:603.00px;font-size:12px;line-height:12px;color:#1b2f55;letter-spacing:-0.338px;">Event</span>
<div style="left:18.5px;top:619.5px;width:267px;height:19.3px;background:#ebebeb;border:1px solid #dcdcdc;"></div>
<div style="left:257.5px;top:620.5px;width:27px;height:17.3px;background:#f3f3f3;border-left:1px solid #e0e0e0;"></div>
<svg style="left:265px;top:623.5px;" width="11" height="11" viewBox="0 0 11 11"><path d="M2.2 2.2L10 10" stroke="#111" stroke-width="1.7"/><path d="M1.2 1.2H8L1.2 8Z" fill="#111"/></svg>
<span class="t" style="left:10.30px;top:647.00px;font-size:12px;line-height:12px;color:#1b2f55;letter-spacing:-0.211px;">Keywords</span>
<div style="left:18.5px;top:662.3px;width:267px;height:19.5px;background:#ebebeb;border:1px solid #dcdcdc;"></div>
<span class="t" style="left:22.60px;top:667.00px;font-size:12px;line-height:12px;color:#8e8e8e;letter-spacing:-0.133px;">Add Tag...</span>
<span class="t" style="left:10.30px;top:691.00px;font-size:12px;line-height:12px;color:#1b2f55;letter-spacing:-0.303px;">Categories</span>
<span class="t" style="left:21.00px;top:708.00px;font-size:12px;line-height:12px;color:#141414;letter-spacing:0.150px;">doc, pdf, txt</span>
<div style="left:18.5px;top:726.2px;width:267px;height:19.5px;background:#ebebeb;border:1px solid #dcdcdc;"></div>
<span class="t" style="left:22.60px;top:730.00px;font-size:12px;line-height:12px;color:#8e8e8e;letter-spacing:-0.133px;">Add Tag...</span>
<span class="t" style="left:10.30px;top:755.00px;font-size:12px;line-height:12px;color:#1b2f55;letter-spacing:0.092px;">Authors</span>
<span class="t" style="left:21.00px;top:772.00px;font-size:12px;line-height:12px;color:#141414;letter-spacing:-0.027px;">rpierce</span>
<div style="left:18.5px;top:790.5px;width:267px;height:19.5px;background:#ebebeb;border:1px solid #dcdcdc;"></div>
<span class="t" style="left:22.60px;top:795.00px;font-size:12px;line-height:12px;color:#8e8e8e;letter-spacing:-0.133px;">Add Tag...</span>
</div>
<div style="left:1514px;top:82px;width:18px;height:803px;background:#f0f0f0;"></div>
<div style="left:1513px;top:86px;width:1px;height:799px;background:#fafafa;"></div>
<div style="left:1514.5px;top:102px;width:14.5px;height:415.5px;background:#cdcdcd;"></div>
<svg style="left:1517.5px;top:90.5px;" width="9" height="7" viewBox="0 0 9 7"><path d="M0.9 5.6L4.3 1.8L7.7 5.6" fill="none" stroke="#4c4c4c" stroke-width="2"/></svg>
<svg style="left:1517.5px;top:873px;" width="9" height="7" viewBox="0 0 9 7"><path d="M0.9 1.4L4.3 5.2L7.7 1.4" fill="none" stroke="#4c4c4c" stroke-width="2"/></svg>
<div style="left:1221px;top:885px;width:310px;height:34px;background:#e2e2e2;border-top:1px solid #7c7c7c;border-bottom:1px solid #7c7c7c;box-shadow:inset 0 1px 0 #f6f6f6;"></div>
<div style="left:1221px;top:919px;width:310px;height:1px;background:#fafafa;"></div>
<svg style="left:1225px;top:892px;" width="19" height="19" viewBox="0 0 19 19"><path d="M2 10.2L8.8 16.6L16.6 2" fill="none" stroke="#a6a6a6" stroke-width="3.6" stroke-linejoin="miter"/><path d="M2 10.2L8.8 16.6L16.6 2" fill="none" stroke="#f2f2f2" stroke-width="1.9"/></svg>
<span class="t" style="left:1246.40px;top:896.00px;font-size:12px;line-height:12px;color:#8c8c8c;letter-spacing:-0.965px;">Save</span>
<svg style="left:1287.5px;top:898.5px;" width="10" height="6" viewBox="0 0 10 6"><path d="M0.2 0.4h9.4L5 5.6z" fill="#111"/></svg>
<svg style="left:1498px;top:892px;" width="20" height="20" viewBox="0 0 20 20"><path d="M6 6.5A6.8 6.8 0 1 1 9.5 17.2" fill="none" stroke="#b2b2b2" stroke-width="1.9"/><path d="M2.2 7.8L8.6 3.2L8.4 9.8Z" fill="#b2b2b2"/></svg>
<div class="clip" style="left:289px;top:121px;width:909px;height:767px;background:#535353;">
<div style="left:0px;top:238px;width:909px;height:62px;background:#3e3e3e;"></div>
<div style="left:0px;top:238px;width:909px;height:1px;background:#303030;"></div>
<div style="left:0px;top:300px;width:909px;height:1px;background:#2c2c2c;"></div>
<div style="left:0px;top:301px;width:909px;height:1px;background:#3c3c3c;"></div>
<div style="left:0px;top:540px;width:909px;height:62px;background:#3e3e3e;"></div>
<div style="left:0px;top:540px;width:909px;height:1px;background:#303030;"></div>
<div style="left:0px;top:602px;width:909px;height:1px;background:#2c2c2c;"></div>
<div style="left:0px;top:603px;width:909px;height:1px;background:#3c3c3c;"></div>
<div style="left:0px;top:302px;width:909px;height:1px;background:#4a4a4a;"></div>
<div style="left:0px;top:842px;width:909px;height:62px;background:#3e3e3e;"></div>
<div style="left:0px;top:842px;width:909px;height:1px;background:#303030;"></div>
<div style="left:0px;top:904px;width:909px;height:1px;background:#2c2c2c;"></div>
<div style="left:0px;top:905px;width:909px;height:1px;background:#3c3c3c;"></div>
<div style="left:0px;top:604px;width:909px;height:1px;background:#4a4a4a;"></div>
<div style="left:0px;top:1px;width:1px;height:766px;background:#4d4d4d;"></div>
<div style="left:0px;top:0px;width:179px;height:1px;background:#0a0a0a;"></div>
<div style="left:0px;top:0px;width:1px;height:239px;background:#0a0a0a;"></div>
<div style="left:1px;top:1px;width:177px;height:237px;background:#818181;outline:1px dotted #f4f4f4;outline-offset:-1px;"></div>
<span class="t" style="left:3.80px;top:9.00px;font-size:12px;line-height:12px;color:#f2f2f2;letter-spacing:-0.169px;">PDF - Portable Document</span>
<div style="left:62px;top:222px;width:4px;height:4px;border:1px solid #ffffff;"></div>
<div style="left:77px;top:222px;width:4px;height:4px;border:1px solid #ffffff;"></div>
<div style="left:92px;top:222px;width:4px;height:4px;border:1px solid #ffffff;"></div>
<div style="left:107px;top:222px;width:4px;height:4px;border:1px solid #ffffff;"></div>
<div style="left:122px;top:222px;width:4px;height:4px;border:1px solid #ffffff;"></div>
<div style="left:159px;top:216px;width:14px;height:14px;border:1px solid #242424;background:linear-gradient(135deg,#4e4e4e,#6c6c6c);box-shadow:inset 0 0 0 1px #3a3a3a;"></div>
<span class="t" style="left:1.00px;top:244.00px;font-size:12px;line-height:12px;color:#f2f2f2;letter-spacing:-0.060px;">ISO32000-1PublicPatentLicense.</span>
<span class="t" style="left:47.30px;top:284.00px;font-size:12px;line-height:12px;color:#f2f2f2;letter-spacing:-0.093px;">29 KB, 612x792</span>
<span class="t" style="left:181.80px;top:9.00px;font-size:12px;line-height:12px;color:#f2f2f2;letter-spacing:-0.169px;">PDF - Portable Document</span>
<div style="left:240px;top:222px;width:4px;height:4px;border:1px solid #8e8e8e;"></div>
<div style="left:255px;top:222px;width:4px;height:4px;border:1px solid #8e8e8e;"></div>
<div style="left:270px;top:222px;width:4px;height:4px;border:1px solid #8e8e8e;"></div>
<div style="left:285px;top:222px;width:4px;height:4px;border:1px solid #8e8e8e;"></div>
<div style="left:300px;top:222px;width:4px;height:4px;border:1px solid #8e8e8e;"></div>
<div style="left:337px;top:216px;width:14px;height:14px;border:1px solid #242424;background:linear-gradient(135deg,#4e4e4e,#6c6c6c);box-shadow:inset 0 0 0 1px #3a3a3a;"></div>
<span class="t" style="left:184.00px;top:244.00px;font-size:12px;line-height:12px;color:#f2f2f2;letter-spacing:-0.068px;">Limitations and Exceptions to C</span>
<span class="t" style="left:221.00px;top:284.00px;font-size:12px;line-height:12px;color:#f2f2f2;letter-spacing:-0.005px;">298 KB, 595x842</span>
<span class="t" style="left:359.80px;top:9.00px;font-size:12px;line-height:12px;color:#f2f2f2;letter-spacing:-0.169px;">PDF - Portable Document</span>
<div style="left:418px;top:222px;width:4px;height:4px;border:1px solid #8e8e8e;"></div>
<div style="left:433px;top:222px;width:4px;height:4px;border:1px solid #8e8e8e;"></div>
<div style="left:448px;top:222px;width:4px;height:4px;border:1px solid #8e8e8e;"></div>
<div style="left:463px;top:222px;width:4px;height:4px;border:1px solid #8e8e8e;"></div>
<div style="left:478px;top:222px;width:4px;height:4px;border:1px solid #8e8e8e;"></div>
<div style="left:515px;top:216px;width:14px;height:14px;border:1px solid #242424;background:linear-gradient(135deg,#4e4e4e,#6c6c6c);box-shadow:inset 0 0 0 1px #3a3a3a;"></div>
<span class="t" style="left:363.00px;top:244.00px;font-size:12px;line-height:12px;color:#f2f2f2;letter-spacing:0.010px;">Forms-for-Government-Chapte</span>
<span class="t" style="left:391.00px;top:284.00px;font-size:12px;line-height:12px;color:#f2f2f2;letter-spacing:0.013px;">6 086 KB, 1024x748</span>
<span class="t" style="left:537.80px;top:9.00px;font-size:12px;line-height:12px;color:#f2f2f2;letter-spacing:-0.169px;">PDF - Portable Document</span>
<svg style="left:590.8px;top:216.39999999999998px;" width="14" height="14" viewBox="0 0 14 14"><path d="M7.00 0.40L8.76 4.87L13.56 5.17L9.85 8.23L11.06 12.88L7.00 10.30L2.94 12.88L4.15 8.23L0.44 5.17L5.24 4.87Z" fill="#ffffff"/></svg>
<svg style="left:605.8499999999999px;top:216.39999999999998px;" width="14" height="14" viewBox="0 0 14 14"><path d="M7.00 0.40L8.76 4.87L13.56 5.17L9.85 8.23L11.06 12.88L7.00 10.30L2.94 12.88L4.15 8.23L0.44 5.17L5.24 4.87Z" fill="#ffffff"/></svg>
<svg style="left:620.9px;top:216.39999999999998px;" width="14" height="14" viewBox="0 0 14 14"><path d="M7.00 0.40L8.76 4.87L13.56 5.17L9.85 8.23L11.06 12.88L7.00 10.30L2.94 12.88L4.15 8.23L0.44 5.17L5.24 4.87Z" fill="#ffffff"/></svg>
<div style="left:641px;top:222px;width:4px;height:4px;border:1px solid #8e8e8e;"></div>
<div style="left:656px;top:222px;width:4px;height:4px;border:1px solid #8e8e8e;"></div>
<div style="left:693px;top:216px;width:14px;height:14px;border:1px solid #242424;background:linear-gradient(135deg,#4e4e4e,#6c6c6c);box-shadow:inset 0 0 0 1px #3a3a3a;"></div>
<span class="t" style="left:541.00px;top:244.00px;font-size:12px;line-height:12px;color:#f2f2f2;letter-spacing:-0.398px;">Free License - Please Read - Tra</span>
<span class="t" style="left:581.00px;top:284.00px;font-size:12px;line-height:12px;color:#f2f2f2;letter-spacing:-0.029px;">63 KB, 595x842</span>
<span class="t" style="left:715.80px;top:9.00px;font-size:12px;line-height:12px;color:#f2f2f2;letter-spacing:-0.169px;">PDF - Portable Document</span>
<div style="left:774px;top:222px;width:4px;height:4px;border:1px solid #8e8e8e;"></div>
<div style="left:789px;top:222px;width:4px;height:4px;border:1px solid #8e8e8e;"></div>
<div style="left:804px;top:222px;width:4px;height:4px;border:1px solid #8e8e8e;"></div>
<div style="left:819px;top:222px;width:4px;height:4px;border:1px solid #8e8e8e;"></div>
<div style="left:834px;top:222px;width:4px;height:4px;border:1px solid #8e8e8e;"></div>
<div style="left:871px;top:216px;width:14px;height:14px;border:1px solid #242424;background:linear-gradient(135deg,#4e4e4e,#6c6c6c);box-shadow:inset 0 0 0 1px #3a3a3a;"></div>
<span class="t" style="left:719.00px;top:244.00px;font-size:12px;line-height:12px;color:#f2f2f2;letter-spacing:-0.406px;">kolzenberg_k_das_versteck_im_</span>
<span class="t" style="left:755.00px;top:284.00px;font-size:12px;line-height:12px;color:#f2f2f2;letter-spacing:-0.005px;">627 KB, 478x639</span>
<span class="t" style="left:3.80px;top:311.00px;font-size:12px;line-height:12px;color:#f2f2f2;letter-spacing:-0.081px;">Text Document</span>
<div style="left:62px;top:524px;width:4px;height:4px;border:1px solid #8e8e8e;"></div>
<div style="left:77px;top:524px;width:4px;height:4px;border:1px solid #8e8e8e;"></div>
<div style="left:92px;top:524px;width:4px;height:4px;border:1px solid #8e8e8e;"></div>
<div style="left:107px;top:524px;width:4px;height:4px;border:1px solid #8e8e8e;"></div>
<div style="left:122px;top:524px;width:4px;height:4px;border:1px solid #8e8e8e;"></div>
<div style="left:159px;top:518px;width:14px;height:14px;border:1px solid #242424;background:linear-gradient(135deg,#4e4e4e,#6c6c6c);box-shadow:inset 0 0 0 1px #3a3a3a;"></div>
<span class="t" style="left:48.00px;top:546.00px;font-size:12px;line-height:12px;color:#f2f2f2;letter-spacing:-0.065px;">Item License.txt</span>
<span class="t" style="left:77.00px;top:586.00px;font-size:12px;line-height:12px;color:#f2f2f2;letter-spacing:-0.504px;">2 KB</span>
<span class="t" style="left:181.80px;top:311.00px;font-size:12px;line-height:12px;color:#f2f2f2;letter-spacing:-0.082px;">PPTX - Microsoft PowerPoint 2</span>
<div style="left:240px;top:524px;width:4px;height:4px;border:1px solid #8e8e8e;"></div>
<div style="left:255px;top:524px;width:4px;height:4px;border:1px solid #8e8e8e;"></div>
<div style="left:270px;top:524px;width:4px;height:4px;border:1px solid #8e8e8e;"></div>
<div style="left:285px;top:524px;width:4px;height:4px;border:1px solid #8e8e8e;"></div>
<div style="left:300px;top:524px;width:4px;height:4px;border:1px solid #8e8e8e;"></div>
<div style="left:337px;top:518px;width:14px;height:14px;border:1px solid #242424;background:linear-gradient(135deg,#4e4e4e,#6c6c6c);box-shadow:inset 0 0 0 1px #3a3a3a;"></div>
<span class="t" style="left:185.00px;top:546.00px;font-size:12px;line-height:12px;color:#f2f2f2;letter-spacing:-0.064px;">Thanksgiving Newsletter Templ</span>
<span class="t" style="left:243.00px;top:586.00px;font-size:12px;line-height:12px;color:#f2f2f2;letter-spacing:-0.172px;">7 520 KB</span>
<span class="t" style="left:359.80px;top:311.00px;font-size:12px;line-height:12px;color:#f2f2f2;letter-spacing:-0.082px;">PPTX - Microsoft PowerPoint 2</span>
<div style="left:418px;top:524px;width:4px;height:4px;border:1px solid #8e8e8e;"></div>
<div style="left:433px;top:524px;width:4px;height:4px;border:1px solid #8e8e8e;"></div>
<div style="left:448px;top:524px;width:4px;height:4px;border:1px solid #8e8e8e;"></div>
<div style="left:463px;top:524px;width:4px;height:4px;border:1px solid #8e8e8e;"></div>
<div style="left:478px;top:524px;width:4px;height:4px;border:1px solid #8e8e8e;"></div>
<div style="left:515px;top:518px;width:14px;height:14px;border:1px solid #242424;background:linear-gradient(135deg,#4e4e4e,#6c6c6c);box-shadow:inset 0 0 0 1px #3a3a3a;"></div>
<span class="t" style="left:362.00px;top:546.00px;font-size:12px;line-height:12px;color:#f2f2f2;letter-spacing:-0.073px;">Chalkboard Background by Slid</span>
<span class="t" style="left:421.00px;top:586.00px;font-size:12px;line-height:12px;color:#f2f2f2;letter-spacing:-0.172px;">9 360 KB</span>
<span class="t" style="left:537.80px;top:311.00px;font-size:12px;line-height:12px;color:#f2f2f2;letter-spacing:-0.169px;">PDF - Portable Document</span>
<div style="left:596px;top:524px;width:4px;height:4px;border:1px solid #8e8e8e;"></div>
<div style="left:611px;top:524px;width:4px;height:4px;border:1px solid #8e8e8e;"></div>
<div style="left:626px;top:524px;width:4px;height:4px;border:1px solid #8e8e8e;"></div>
<div style="left:641px;top:524px;width:4px;height:4px;border:1px solid #8e8e8e;"></div>
<div style="left:656px;top:524px;width:4px;height:4px;border:1px solid #8e8e8e;"></div>
<div style="left:693px;top:518px;width:14px;height:14px;border:1px solid #242424;background:linear-gradient(135deg,#4e4e4e,#6c6c6c);box-shadow:inset 0 0 0 1px #3a3a3a;"></div>
<span class="t" style="left:541.00px;top:546.00px;font-size:12px;line-height:12px;color:#f2f2f2;letter-spacing:-0.153px;">Jane Austen&#x27;s Pride and Prejudi</span>
<span class="t" style="left:572.00px;top:586.00px;font-size:12px;line-height:12px;color:#f2f2f2;letter-spacing:-0.006px;">3 520 KB, 216x330</span>
<span class="t" style="left:715.80px;top:311.00px;font-size:12px;line-height:12px;color:#f2f2f2;letter-spacing:-0.169px;">PDF - Portable Document</span>
<div style="left:774px;top:524px;width:4px;height:4px;border:1px solid #8e8e8e;"></div>
<div style="left:789px;top:524px;width:4px;height:4px;border:1px solid #8e8e8e;"></div>
<div style="left:804px;top:524px;width:4px;height:4px;border:1px solid #8e8e8e;"></div>
<div style="left:819px;top:524px;width:4px;height:4px;border:1px solid #8e8e8e;"></div>
<div style="left:834px;top:524px;width:4px;height:4px;border:1px solid #8e8e8e;"></div>
<div style="left:871px;top:518px;width:14px;height:14px;border:1px solid #242424;background:linear-gradient(135deg,#4e4e4e,#6c6c6c);box-shadow:inset 0 0 0 1px #3a3a3a;"></div>
<span class="t" style="left:718.00px;top:546.00px;font-size:12px;line-height:12px;color:#f2f2f2;letter-spacing:-0.103px;">Exploratory Software Testing.pd</span>
<span class="t" style="left:750.00px;top:586.00px;font-size:12px;line-height:12px;color:#f2f2f2;letter-spacing:-0.006px;">4 462 KB, 252x329</span>
<span class="t" style="left:3.80px;top:613.00px;font-size:12px;line-height:12px;color:#f2f2f2;letter-spacing:-0.169px;">PDF - Portable Document</span>
<div style="left:62px;top:826px;width:4px;height:4px;border:1px solid #8e8e8e;"></div>
<div style="left:77px;top:826px;width:4px;height:4px;border:1px solid #8e8e8e;"></div>
<div style="left:92px;top:826px;width:4px;height:4px;border:1px solid #8e8e8e;"></div>
<div style="left:107px;top:826px;width:4px;height:4px;border:1px solid #8e8e8e;"></div>
<div style="left:122px;top:826px;width:4px;height:4px;border:1px solid #8e8e8e;"></div>
<div style="left:159px;top:820px;width:14px;height:14px;border:1px solid #242424;background:linear-gradient(135deg,#4e4e4e,#6c6c6c);box-shadow:inset 0 0 0 1px #3a3a3a;"></div>
<span class="t" style="left:181.80px;top:613.00px;font-size:12px;line-height:12px;color:#f2f2f2;letter-spacing:-0.169px;">PDF - Portable Document</span>
<div style="left:240px;top:826px;width:4px;height:4px;border:1px solid #8e8e8e;"></div>
<div style="left:255px;top:826px;width:4px;height:4px;border:1px solid #8e8e8e;"></div>
<div style="left:270px;top:826px;width:4px;height:4px;border:1px solid #8e8e8e;"></div>
<div style="left:285px;top:826px;width:4px;height:4px;border:1px solid #8e8e8e;"></div>
<div style="left:300px;top:826px;width:4px;height:4px;border:1px solid #8e8e8e;"></div>
<div style="left:337px;top:820px;width:14px;height:14px;border:1px solid #242424;background:linear-gradient(135deg,#4e4e4e,#6c6c6c);box-shadow:inset 0 0 0 1px #3a3a3a;"></div>
<span class="t" style="left:359.80px;top:613.00px;font-size:12px;line-height:12px;color:#f2f2f2;letter-spacing:-0.169px;">PDF - Portable Document</span>
<div style="left:418px;top:826px;width:4px;height:4px;border:1px solid #8e8e8e;"></div>
<div style="left:433px;top:826px;width:4px;height:4px;border:1px solid #8e8e8e;"></div>
<div style="left:448px;top:826px;width:4px;height:4px;border:1px solid #8e8e8e;"></div>
<div style="left:463px;top:826px;width:4px;height:4px;border:1px solid #8e8e8e;"></div>
<div style="left:478px;top:826px;width:4px;height:4px;border:1px solid #8e8e8e;"></div>
<div style="left:515px;top:820px;width:14px;height:14px;border:1px solid #242424;background:linear-gradient(135deg,#4e4e4e,#6c6c6c);box-shadow:inset 0 0 0 1px #3a3a3a;"></div>
<span class="t" style="left:537.80px;top:613.00px;font-size:12px;line-height:12px;color:#f2f2f2;letter-spacing:-0.169px;">PDF - Portable Document</span>
<div style="left:596px;top:826px;width:4px;height:4px;border:1px solid #8e8e8e;"></div>
<div style="left:611px;top:826px;width:4px;height:4px;border:1px solid #8e8e8e;"></div>
<div style="left:626px;top:826px;width:4px;height:4px;border:1px solid #8e8e8e;"></div>
<div style="left:641px;top:826px;width:4px;height:4px;border:1px solid #8e8e8e;"></div>
<div style="left:656px;top:826px;width:4px;height:4px;border:1px solid #8e8e8e;"></div>
<div style="left:693px;top:820px;width:14px;height:14px;border:1px solid #242424;background:linear-gradient(135deg,#4e4e4e,#6c6c6c);box-shadow:inset 0 0 0 1px #3a3a3a;"></div>
<span class="t" style="left:715.80px;top:613.00px;font-size:12px;line-height:12px;color:#f2f2f2;letter-spacing:0.007px;">DOCX - Microsoft Word 2007</span>
<div style="left:774px;top:826px;width:4px;height:4px;border:1px solid #8e8e8e;"></div>
<div style="left:789px;top:826px;width:4px;height:4px;border:1px solid #8e8e8e;"></div>
<div style="left:804px;top:826px;width:4px;height:4px;border:1px solid #8e8e8e;"></div>
<div style="left:819px;top:826px;width:4px;height:4px;border:1px solid #8e8e8e;"></div>
<div style="left:834px;top:826px;width:4px;height:4px;border:1px solid #8e8e8e;"></div>
<div style="left:871px;top:820px;width:14px;height:14px;border:1px solid #242424;background:linear-gradient(135deg,#4e4e4e,#6c6c6c);box-shadow:inset 0 0 0 1px #3a3a3a;"></div>
<svg style="left:542.5px;top:211.5px;" width="16" height="23" viewBox="0 0 16 23"><path d="M1 21.6V8A7 7 0 0 1 15 8V21.6Z" fill="#43a047" stroke="#0f1a0f" stroke-width="1.3"/><circle cx="8" cy="5.8" r="2" fill="#3a8a3e" stroke="#0f1a0f" stroke-width="1"/></svg>
</div>
<div style="left:1198px;top:121px;width:17px;height:767px;background:#f0f0f0;"></div>
<div style="left:1199px;top:138.5px;width:15px;height:461.5px;background:#cdcdcd;"></div>
<svg style="left:1202.5px;top:127px;" width="9" height="7" viewBox="0 0 9 7"><path d="M0.9 5.6L4.3 1.8L7.7 5.6" fill="none" stroke="#4c4c4c" stroke-width="2"/></svg>
<svg style="left:1202.5px;top:689.5px;" width="9" height="7" viewBox="0 0 9 7"><path d="M0.9 1.4L4.3 5.2L7.7 1.4" fill="none" stroke="#4c4c4c" stroke-width="2"/></svg>
<div style="left:1198px;top:701px;width:17px;height:1px;background:#d0d0d0;"></div>
<div style="left:1203px;top:711px;width:8.5px;height:98px;background:linear-gradient(90deg,#9a9a9a,#c8c8c8 40%,#b4b4b4);border:1px solid #555;"></div>
<div style="left:1199px;top:727px;width:15.5px;height:19px;background:linear-gradient(#fdfdfd,#dedede);border:1px solid #c9c9c9;border-radius:1px;box-shadow:0 0 1px #999;"></div>
<div style="left:1203.5px;top:732.5px;width:6px;height:1px;background:#aaa;"></div>
<div style="left:1203.5px;top:735.5px;width:6px;height:1px;background:#aaa;"></div>
<div style="left:1203.5px;top:738.5px;width:6px;height:1px;background:#aaa;"></div>
<div style="left:1198.5px;top:818px;width:16px;height:19px;background:#a9a9a9;border:1px solid #9a9a9a;"></div>
<div style="left:1203px;top:827px;width:7px;height:1px;background:#333;"></div>
<div style="left:1198.5px;top:838px;width:16px;height:19px;background:#a9a9a9;border:1px solid #9a9a9a;"></div>
<div style="left:1203px;top:845.5px;width:7px;height:1px;background:#333;"></div>
<div style="left:1203px;top:848.5px;width:7px;height:1px;background:#333;"></div>
<div style="left:1198.5px;top:859px;width:16px;height:29px;background:#fafafa;"></div>
<span class="t" style="left:1203.86px;top:865.00px;font-size:19px;line-height:19px;color:#111;font-weight:700;font-family:'Liberation Serif', serif;">i</span>
<div class="clip" style="left:289px;top:121px;width:909px;height:767px;">
<div style="left:23px;top:34px;width:134px;height:171px;background:#7c7c7c;border:1px solid #0c0c0c;"></div>
<div style="left:26px;top:37px;width:128px;height:165px;background:#0c0c0c;"></div>
<div class="clip" style="left:27px;top:38px;width:126px;height:163px;background:#ffffff;">
<svg style="left:15.5px;top:6.5px;" width="10" height="11" viewBox="0 0 10 11"><rect x="0" y="0" width="9.4" height="7.8" fill="#d8232f"/><path d="M3.6 0L0 7.8V0ZM5.8 0L9.4 7.8V0Z" fill="#d8232f"/><path d="M3.7 0H5.7L9.4 7.8H7.4L6.4 5.6H4.4L4.7 4.2L4.7 2.4L2 7.8H0Z" fill="#fff"/><path d="M0 0H3.7L0 7.8Z M9.4 0H5.7L9.4 7.8Z" fill="#d8232f"/><rect x="0.2" y="8.7" width="8.8" height="1.6" fill="#222"/></svg>
<svg style="left:0px;top:0px;filter:blur(0.3px);" width="126" height="163" viewBox="0 0 126 163"><path d="M15.6 26.10H43.0" stroke="#555" stroke-width="1.2" stroke-dasharray="2.8 0.55 2.1 0.55 4.1 0.55 1.8 0.55 3.6 0.55 3.0 0.55 1.7 0.55 3.5 0.55 1.6 0.55" opacity="0.36"/><path d="M15.6 29.20H36.0" stroke="#555" stroke-width="1.2" stroke-dasharray="3.2 0.55 1.8 0.55 1.9 0.55 3.2 0.55 4.8 0.55 2.0 0.55 2.4 0.55" opacity="0.36"/><path d="M15.6 32.30H42.0" stroke="#555" stroke-width="1.2" stroke-dasharray="4.0 0.55 5.3 0.55 3.8 0.55 3.1 0.55 5.4 0.55 1.7 0.55" opacity="0.36"/><path d="M15.6 38.50H111.5" stroke="#555" stroke-width="1.2" stroke-dasharray="4.9 0.55 2.7 0.55 2.1 0.55 2.0 0.55 2.7 0.55 4.8 0.55 2.2 0.55 3.8 0.55 4.1 0.55 3.0 0.55 3.7 0.55 1.8 0.55 1.7 0.55 2.3 0.55 4.2 0.55 3.2 0.55 2.8 0.55 3.8 0.55 3.3 0.55 2.7 0.55 4.7 0.55 4.3 0.55 2.5 0.55 3.8 0.55 3.6 0.55 5.0 0.55" opacity="0.36"/><path d="M15.6 41.60H111.5" stroke="#555" stroke-width="1.2" stroke-dasharray="4.4 0.55 2.7 0.55 5.4 0.55 2.0 0.55 3.2 0.55 4.5 0.55 2.1 0.55 3.5 0.55 1.7 0.55 4.2 0.55 4.6 0.55 3.8 0.55 5.0 0.55 2.8 0.55 4.3 0.55 3.9 0.55 3.8 0.55 3.3 0.55 4.9 0.55 5.3 0.55 3.4 0.55 4.2 0.55 1.7 0.55" opacity="0.36"/><path d="M15.6 44.70H111.5" stroke="#555" stroke-width="1.2" stroke-dasharray="4.3 0.55 4.1 0.55 5.5 0.55 4.8 0.55 2.6 0.55 3.0 0.55 4.2 0.55 1.6 0.55 3.3 0.55 2.2 0.55 2.0 0.55 1.7 0.55 4.6 0.55 2.0 0.55 2.5 0.55 3.1 0.55 5.0 0.55 1.8 0.55 3.3 0.55 3.7 0.55 5.0 0.55 4.8 0.55 5.0 0.55 2.6 0.55 3.2 0.55" opacity="0.36"/><path d="M15.6 47.80H90.4" stroke="#555" stroke-width="1.2" stroke-dasharray="2.9 0.55 5.0 0.55 5.3 0.55 2.1 0.55 2.2 0.55 2.4 0.55 2.4 0.55 3.4 0.55 3.9 0.55 2.6 0.55 1.5 0.55 3.2 0.55 3.0 0.55 3.8 0.55 5.3 0.55 4.3 0.55 3.6 0.55 4.0 0.55 4.2 0.55" opacity="0.36"/><path d="M15.6 54.10H31.0" stroke="#555" stroke-width="1.2" stroke-dasharray="1.7 0.55 5.1 0.55 4.6 0.55 5.0 0.55" opacity="0.36"/><path d="M15.6 57.10H110.0" stroke="#555" stroke-width="1.2" stroke-dasharray="4.7 0.55 3.1 0.55 3.1 0.55 1.9 0.55 4.0 0.55 1.7 0.55 1.8 0.55 2.3 0.55 2.1 0.55 2.9 0.55 1.7 0.55 1.5 0.55 2.1 0.55 1.9 0.55 3.0 0.55 1.6 0.55 5.0 0.55 4.0 0.55 2.1 0.55 2.5 0.55 2.9 0.55 3.0 0.55 2.0 0.55 4.9 0.55 5.5 0.55 3.4 0.55 3.4 0.55 1.8 0.55" opacity="0.36"/><path d="M15.6 60.20H110.0" stroke="#555" stroke-width="1.2" stroke-dasharray="1.9 0.55 2.9 0.55 2.6 0.55 4.8 0.55 2.1 0.55 1.6 0.55 5.3 0.55 3.6 0.55 2.1 0.55 3.7 0.55 1.6 0.55 3.6 0.55 5.4 0.55 5.0 0.55 4.3 0.55 2.5 0.55 3.0 0.55 2.2 0.55 4.6 0.55 3.6 0.55 4.6 0.55 2.8 0.55 2.4 0.55 4.7 0.55 5.4 0.55" opacity="0.36"/><path d="M15.6 63.30H110.0" stroke="#555" stroke-width="1.2" stroke-dasharray="4.9 0.55 4.7 0.55 4.8 0.55 4.5 0.55 2.4 0.55 3.6 0.55 2.9 0.55 1.6 0.55 1.6 0.55 2.6 0.55 2.5 0.55 4.3 0.55 5.3 0.55 3.3 0.55 5.2 0.55 5.5 0.55 5.3 0.55 3.0 0.55 2.4 0.55 2.4 0.55 2.3 0.55 2.3 0.55 4.0 0.55 5.1 0.55" opacity="0.36"/><path d="M15.6 66.40H110.0" stroke="#555" stroke-width="1.2" stroke-dasharray="4.9 0.55 3.4 0.55 4.1 0.55 4.7 0.55 1.8 0.55 4.1 0.55 5.1 0.55 4.6 0.55 4.5 0.55 3.4 0.55 2.2 0.55 4.7 0.55 2.8 0.55 4.7 0.55 5.4 0.55 3.1 0.55 3.1 0.55 5.3 0.55 4.4 0.55 2.2 0.55 2.0 0.55 2.1 0.55" opacity="0.36"/><path d="M15.6 69.50H110.0" stroke="#555" stroke-width="1.2" stroke-dasharray="5.1 0.55 4.7 0.55 2.1 0.55 4.8 0.55 5.4 0.55 4.1 0.55 2.9 0.55 3.7 0.55 2.0 0.55 1.6 0.55 5.4 0.55 4.1 0.55 3.6 0.55 5.2 0.55 3.2 0.55 5.0 0.55 4.8 0.55 2.3 0.55 2.5 0.55 2.7 0.55 2.5 0.55 3.8 0.55 2.5 0.55" opacity="0.36"/><path d="M15.6 72.60H74.1" stroke="#555" stroke-width="1.2" stroke-dasharray="3.2 0.55 2.0 0.55 5.1 0.55 2.9 0.55 3.3 0.55 3.8 0.55 5.1 0.55 3.2 0.55 5.2 0.55 3.5 0.55 3.6 0.55 3.6 0.55 1.6 0.55 3.3 0.55 2.2 0.55" opacity="0.36"/><path d="M15.6 78.40H29.0" stroke="#555" stroke-width="1.2" stroke-dasharray="1.5 0.55 4.7 0.55 2.2 0.55 3.4 0.55" opacity="0.36"/><path d="M15.6 81.70H111.5" stroke="#555" stroke-width="1.2" stroke-dasharray="4.4 0.55 3.7 0.55 2.8 0.55 3.6 0.55 3.7 0.55 4.6 0.55 1.9 0.55 3.7 0.55 2.5 0.55 2.6 0.55 4.6 0.55 3.5 0.55 3.7 0.55 4.5 0.55 5.1 0.55 3.3 0.55 4.0 0.55 3.5 0.55 3.5 0.55 4.3 0.55 3.3 0.55 3.6 0.55 3.4 0.55" opacity="0.36"/><path d="M15.6 84.80H111.5" stroke="#555" stroke-width="1.2" stroke-dasharray="5.3 0.55 4.3 0.55 5.0 0.55 5.3 0.55 2.5 0.55 3.7 0.55 5.3 0.55 4.9 0.55 2.0 0.55 2.0 0.55 3.3 0.55 1.8 0.55 2.5 0.55 1.8 0.55 4.2 0.55 4.6 0.55 5.1 0.55 2.1 0.55 4.4 0.55 4.1 0.55 2.1 0.55 5.0 0.55 5.4 0.55" opacity="0.36"/><path d="M15.6 87.90H111.5" stroke="#555" stroke-width="1.2" stroke-dasharray="2.4 0.55 5.3 0.55 3.1 0.55 3.4 0.55 5.5 0.55 4.8 0.55 2.1 0.55 3.2 0.55 3.6 0.55 2.9 0.55 2.3 0.55 2.8 0.55 4.4 0.55 1.6 0.55 3.7 0.55 3.3 0.55 1.6 0.55 2.8 0.55 4.0 0.55 3.5 0.55 1.8 0.55 5.4 0.55 4.7 0.55 5.4 0.55" opacity="0.36"/><path d="M15.6 91.00H101.9" stroke="#555" stroke-width="1.2" stroke-dasharray="1.9 0.55 2.6 0.55 1.7 0.55 4.6 0.55 2.6 0.55 2.0 0.55 3.2 0.55 5.1 0.55 4.8 0.55 2.5 0.55 2.1 0.55 5.2 0.55 3.8 0.55 4.3 0.55 1.9 0.55 1.7 0.55 4.3 0.55 3.2 0.55 1.8 0.55 5.3 0.55 4.0 0.55 4.7 0.55 1.8 0.55" opacity="0.36"/><path d="M15.6 100.00H33.0" stroke="#555" stroke-width="1.2" stroke-dasharray="4.9 0.55 1.8 0.55 5.0 0.55 3.3 0.55 2.9 0.55" opacity="0.36"/><path d="M15.6 103.30H63.0" stroke="#555" stroke-width="1.2" stroke-dasharray="3.7 0.55 5.2 0.55 2.6 0.55 2.0 0.55 3.6 0.55 2.5 0.55 1.9 0.55 2.1 0.55 1.7 0.55 2.3 0.55 2.7 0.55 2.7 0.55 4.5 0.55 2.7 0.55" opacity="0.36"/><path d="M15.6 109.50H27.0" stroke="#555" stroke-width="1.2" stroke-dasharray="3.5 0.55 2.2 0.55 2.9 0.55 1.6 0.55" opacity="0.36"/><path d="M15.6 112.70H106.0" stroke="#555" stroke-width="1.2" stroke-dasharray="2.5 0.55 1.6 0.55 4.4 0.55 3.7 0.55 2.3 0.55 3.4 0.55 5.2 0.55 1.9 0.55 4.8 0.55 3.2 0.55 3.5 0.55 4.8 0.55 3.1 0.55 3.5 0.55 4.3 0.55 5.4 0.55 2.9 0.55 4.8 0.55 4.3 0.55 4.0 0.55 3.1 0.55 2.9 0.55" opacity="0.36"/><path d="M15.6 115.85H89.7" stroke="#555" stroke-width="1.2" stroke-dasharray="1.7 0.55 2.0 0.55 1.8 0.55 4.5 0.55 2.5 0.55 2.2 0.55 1.8 0.55 4.9 0.55 5.0 0.55 4.2 0.55 2.6 0.55 2.5 0.55 2.7 0.55 3.3 0.55 2.1 0.55 3.3 0.55 2.6 0.55 5.3 0.55 5.4 0.55 3.7 0.55" opacity="0.36"/><path d="M15.6 122.00H111.5" stroke="#555" stroke-width="1.2" stroke-dasharray="2.5 0.55 5.4 0.55 2.7 0.55 2.9 0.55 1.5 0.55 3.0 0.55 3.4 0.55 3.5 0.55 2.3 0.55 3.5 0.55 1.5 0.55 2.6 0.55 1.9 0.55 3.1 0.55 1.7 0.55 1.6 0.55 2.7 0.55 2.4 0.55 3.8 0.55 3.6 0.55 4.5 0.55 4.1 0.55 4.4 0.55 5.0 0.55 3.1 0.55 2.8 0.55 5.4 0.55" opacity="0.36"/><path d="M15.6 125.07H111.5" stroke="#555" stroke-width="1.2" stroke-dasharray="2.1 0.55 4.4 0.55 4.1 0.55 1.7 0.55 4.8 0.55 5.1 0.55 4.0 0.55 4.4 0.55 4.7 0.55 2.1 0.55 3.6 0.55 3.5 0.55 4.8 0.55 4.7 0.55 4.8 0.55 3.8 0.55 5.1 0.55 4.2 0.55 4.3 0.55 2.4 0.55 1.6 0.55 2.0 0.55 2.9 0.55" opacity="0.36"/><path d="M15.6 128.14H111.5" stroke="#555" stroke-width="1.2" stroke-dasharray="1.9 0.55 4.8 0.55 3.7 0.55 4.0 0.55 4.0 0.55 4.2 0.55 3.5 0.55 1.5 0.55 4.7 0.55 4.5 0.55 3.5 0.55 3.6 0.55 4.1 0.55 1.8 0.55 4.4 0.55 2.5 0.55 1.8 0.55 2.6 0.55 4.4 0.55 2.3 0.55 4.5 0.55 5.4 0.55 3.5 0.55 3.0 0.55" opacity="0.36"/><path d="M15.6 131.21H97.1" stroke="#555" stroke-width="1.2" stroke-dasharray="3.4 0.55 4.2 0.55 4.6 0.55 4.0 0.55 4.1 0.55 1.8 0.55 2.1 0.55 2.5 0.55 4.5 0.55 2.7 0.55 3.8 0.55 1.5 0.55 1.7 0.55 2.6 0.55 4.2 0.55 4.3 0.55 4.2 0.55 2.7 0.55 3.6 0.55 3.4 0.55 3.4 0.55 2.0 0.55" opacity="0.36"/><path d="M15.6 137.50H108.0" stroke="#555" stroke-width="1.2" stroke-dasharray="5.1 0.55 2.3 0.55 5.4 0.55 5.2 0.55 1.6 0.55 3.3 0.55 4.8 0.55 5.4 0.55 3.3 0.55 2.6 0.55 2.3 0.55 5.3 0.55 2.3 0.55 3.8 0.55 2.1 0.55 3.6 0.55 5.3 0.55 2.0 0.55 4.8 0.55 3.5 0.55 5.0 0.55 4.3 0.55" opacity="0.36"/><path d="M15.6 140.55H108.0" stroke="#555" stroke-width="1.2" stroke-dasharray="2.4 0.55 5.1 0.55 3.4 0.55 1.6 0.55 1.5 0.55 3.5 0.55 3.3 0.55 2.7 0.55 2.1 0.55 2.9 0.55 2.8 0.55 4.9 0.55 1.5 0.55 4.5 0.55 4.9 0.55 2.0 0.55 5.2 0.55 4.4 0.55 5.1 0.55 2.7 0.55 3.0 0.55 3.1 0.55 5.5 0.55 3.9 0.55" opacity="0.36"/><path d="M15.6 143.60H108.0" stroke="#555" stroke-width="1.2" stroke-dasharray="2.9 0.55 3.2 0.55 2.6 0.55 1.7 0.55 1.9 0.55 4.8 0.55 2.6 0.55 5.2 0.55 2.5 0.55 2.6 0.55 3.5 0.55 2.3 0.55 3.0 0.55 5.3 0.55 5.0 0.55 4.7 0.55 4.0 0.55 5.2 0.55 5.3 0.55 3.7 0.55 4.4 0.55 1.7 0.55 4.4 0.55" opacity="0.36"/><path d="M15.6 146.65H26.7" stroke="#555" stroke-width="1.2" stroke-dasharray="3.3 0.55 4.5 0.55 4.1 0.55" opacity="0.36"/></svg>
</div>
<div style="left:206px;top:34px;width:123px;height:171px;background:#7c7c7c;border:1px solid #0c0c0c;"></div>
<div style="left:209px;top:37px;width:117px;height:165px;background:#0c0c0c;"></div>
<div class="clip" style="left:210px;top:38px;width:115px;height:163px;background:#ffffff;">
<div style="left:13px;top:13.5px;width:8.5px;height:8.5px;background:#1a1a1a;"></div>
<svg style="left:0px;top:0px;filter:blur(0.3px);" width="115" height="163" viewBox="0 0 115 163"><path d="M27.5 27.50H102.5" stroke="#444" stroke-width="1.15" stroke-dasharray="2.6 0.55 1.7 0.55 5.2 0.55 2.0 0.55 3.4 0.55 2.9 0.55 2.7 0.55 4.5 0.55 5.4 0.55 2.5 0.55 4.1 0.55 2.7 0.55 3.7 0.55 3.1 0.55 2.2 0.55 2.1 0.55 2.3 0.55 5.1 0.55 3.5 0.55 2.4 0.55" opacity="0.36"/><path d="M31.0 31.10H98.0" stroke="#444" stroke-width="1.15" stroke-dasharray="5.1 0.55 5.5 0.55 3.3 0.55 2.1 0.55 2.3 0.55 1.9 0.55 2.9 0.55 1.9 0.55 2.5 0.55 2.5 0.55 3.8 0.55 5.0 0.55 4.5 0.55 3.2 0.55 3.2 0.55 3.6 0.55 3.0 0.55 2.9 0.55" opacity="0.36"/><path d="M52.0 34.80H76.0" stroke="#444" stroke-width="1.15" stroke-dasharray="1.7 0.55 2.6 0.55 5.4 0.55 2.0 0.55 3.5 0.55 4.0 0.55 5.0 0.55" opacity="0.36"/><path d="M13.0 43.50H24.0" stroke="#444" stroke-width="1.15" stroke-dasharray="2.4 0.55 2.6 0.55 2.5 0.55 3.1 0.55" opacity="0.36"/><path d="M16.6 48.80H95.5" stroke="#444" stroke-width="1.15" stroke-dasharray="3.3 0.55 5.3 0.55 4.9 0.55 5.0 0.55 1.6 0.55 1.6 0.55 4.3 0.55 5.1 0.55 3.4 0.55 3.8 0.55 1.5 0.55 3.1 0.55 5.2 0.55 4.8 0.55 4.9 0.55 5.4 0.55 2.5 0.55 1.9 0.55 2.1 0.55" opacity="0.36"/><path d="M16.6 51.50H95.5" stroke="#444" stroke-width="1.15" stroke-dasharray="3.6 0.55 4.2 0.55 5.3 0.55 4.4 0.55 4.1 0.55 4.6 0.55 3.3 0.55 3.7 0.55 1.7 0.55 4.6 0.55 2.4 0.55 5.2 0.55 4.1 0.55 2.7 0.55 2.0 0.55 2.5 0.55 4.0 0.55 4.3 0.55 1.9 0.55" opacity="0.36"/><path d="M16.6 54.10H24.5" stroke="#444" stroke-width="1.15" stroke-dasharray="1.8 0.55 3.6 0.55 3.8 0.55" opacity="0.36"/><path d="M16.6 59.60H98.0" stroke="#444" stroke-width="1.15" stroke-dasharray="3.1 0.55 2.4 0.55 3.9 0.55 1.5 0.55 2.7 0.55 3.3 0.55 5.3 0.55 4.1 0.55 5.0 0.55 3.4 0.55 2.4 0.55 2.5 0.55 5.3 0.55 4.3 0.55 2.7 0.55 1.6 0.55 3.5 0.55 4.2 0.55 3.2 0.55 2.5 0.55 4.2 0.55" opacity="0.36"/><path d="M16.6 62.20H81.7" stroke="#444" stroke-width="1.15" stroke-dasharray="5.2 0.55 2.4 0.55 1.6 0.55 2.9 0.55 3.2 0.55 4.2 0.55 2.3 0.55 4.7 0.55 4.5 0.55 3.5 0.55 2.3 0.55 5.4 0.55 2.7 0.55 4.8 0.55 2.4 0.55 2.4 0.55 4.5 0.55" opacity="0.36"/><path d="M16.6 67.50H99.0" stroke="#444" stroke-width="1.15" stroke-dasharray="2.7 0.55 5.3 0.55 3.5 0.55 2.2 0.55 2.4 0.55 3.2 0.55 4.2 0.55 5.3 0.55 2.1 0.55 3.1 0.55 2.4 0.55 5.4 0.55 2.1 0.55 1.7 0.55 1.7 0.55 3.1 0.55 5.1 0.55 5.0 0.55 4.4 0.55 5.5 0.55 5.2 0.55" opacity="0.36"/><path d="M16.6 70.30H99.0" stroke="#444" stroke-width="1.15" stroke-dasharray="2.8 0.55 2.2 0.55 5.2 0.55 4.5 0.55 1.6 0.55 4.2 0.55 3.0 0.55 3.0 0.55 2.8 0.55 2.2 0.55 1.5 0.55 2.6 0.55 2.9 0.55 5.3 0.55 2.0 0.55 5.4 0.55 2.3 0.55 2.9 0.55 4.8 0.55 4.8 0.55 3.2 0.55 1.7 0.55" opacity="0.36"/><path d="M16.6 72.90H23.2" stroke="#444" stroke-width="1.15" stroke-dasharray="3.4 0.55 3.0 0.55" opacity="0.36"/><path d="M16.6 78.40H99.0" stroke="#444" stroke-width="1.15" stroke-dasharray="5.2 0.55 2.3 0.55 3.0 0.55 5.1 0.55 1.6 0.55 3.1 0.55 4.7 0.55 4.6 0.55 1.7 0.55 1.6 0.55 1.8 0.55 5.2 0.55 2.5 0.55 4.5 0.55 5.1 0.55 2.9 0.55 2.6 0.55 5.3 0.55 4.0 0.55 2.5 0.55 4.4 0.55" opacity="0.36"/><path d="M16.6 81.20H99.0" stroke="#444" stroke-width="1.15" stroke-dasharray="2.8 0.55 2.6 0.55 1.5 0.55 4.5 0.55 5.2 0.55 4.0 0.55 5.3 0.55 1.6 0.55 2.4 0.55 3.4 0.55 5.3 0.55 5.3 0.55 3.0 0.55 2.5 0.55 3.2 0.55 3.5 0.55 5.2 0.55 2.2 0.55 4.7 0.55 4.5 0.55" opacity="0.36"/><path d="M16.6 84.00H99.0" stroke="#444" stroke-width="1.15" stroke-dasharray="4.8 0.55 4.6 0.55 3.9 0.55 2.8 0.55 2.8 0.55 2.9 0.55 4.6 0.55 1.8 0.55 2.3 0.55 4.5 0.55 2.5 0.55 1.8 0.55 1.6 0.55 3.7 0.55 2.8 0.55 5.4 0.55 5.0 0.55 5.5 0.55 2.6 0.55 1.8 0.55 1.9 0.55 3.5 0.55" opacity="0.36"/><path d="M16.6 86.70H33.1" stroke="#444" stroke-width="1.15" stroke-dasharray="4.3 0.55 3.3 0.55 2.4 0.55 3.2 0.55 4.0 0.55" opacity="0.36"/><path d="M16.6 92.00H101.0" stroke="#444" stroke-width="1.15" stroke-dasharray="4.2 0.55 4.5 0.55 4.9 0.55 4.2 0.55 2.0 0.55 4.9 0.55 2.7 0.55 3.8 0.55 3.0 0.55 4.5 0.55 2.3 0.55 2.5 0.55 2.5 0.55 2.1 0.55 5.0 0.55 3.8 0.55 2.8 0.55 3.1 0.55 5.5 0.55 3.5 0.55 2.4 0.55" opacity="0.36"/><path d="M16.6 94.80H101.0" stroke="#444" stroke-width="1.15" stroke-dasharray="4.7 0.55 4.1 0.55 5.5 0.55 1.9 0.55 3.4 0.55 4.8 0.55 4.9 0.55 5.2 0.55 1.7 0.55 2.7 0.55 2.0 0.55 2.3 0.55 5.4 0.55 3.8 0.55 5.2 0.55 3.0 0.55 5.0 0.55 3.3 0.55 2.5 0.55 4.6 0.55" opacity="0.36"/><path d="M16.6 97.50H37.7" stroke="#444" stroke-width="1.15" stroke-dasharray="5.3 0.55 1.9 0.55 3.9 0.55 4.0 0.55 2.4 0.55 3.0 0.55" opacity="0.36"/><path d="M13.0 105.40H26.0" stroke="#444" stroke-width="1.15" stroke-dasharray="2.1 0.55 2.3 0.55 2.5 0.55 3.9 0.55 4.1 0.55" opacity="0.36"/><path d="M13.0 110.70H101.4" stroke="#444" stroke-width="1.15" stroke-dasharray="2.3 0.55 1.5 0.55 2.8 0.55 4.2 0.55 2.2 0.55 2.7 0.55 2.3 0.55 4.7 0.55 3.7 0.55 1.8 0.55 1.9 0.55 3.1 0.55 3.7 0.55 4.1 0.55 1.9 0.55 2.2 0.55 4.3 0.55 3.1 0.55 2.6 0.55 2.7 0.55 5.3 0.55 2.7 0.55 3.8 0.55 2.9 0.55 3.2 0.55" opacity="0.36"/><path d="M13.0 113.51H101.4" stroke="#444" stroke-width="1.15" stroke-dasharray="5.0 0.55 5.5 0.55 3.0 0.55 2.3 0.55 4.4 0.55 2.3 0.55 1.5 0.55 5.1 0.55 3.2 0.55 4.8 0.55 3.1 0.55 5.0 0.55 3.3 0.55 2.2 0.55 1.6 0.55 3.7 0.55 4.1 0.55 5.1 0.55 1.9 0.55 4.0 0.55 3.0 0.55 3.5 0.55" opacity="0.36"/><path d="M13.0 116.32H101.4" stroke="#444" stroke-width="1.15" stroke-dasharray="2.1 0.55 2.6 0.55 3.6 0.55 5.2 0.55 1.9 0.55 3.5 0.55 4.7 0.55 5.4 0.55 2.3 0.55 2.0 0.55 5.3 0.55 5.4 0.55 3.4 0.55 1.7 0.55 5.2 0.55 3.1 0.55 5.1 0.55 4.0 0.55 4.8 0.55 2.1 0.55 4.6 0.55" opacity="0.36"/><path d="M13.0 119.13H101.4" stroke="#444" stroke-width="1.15" stroke-dasharray="2.4 0.55 3.1 0.55 4.9 0.55 4.8 0.55 2.2 0.55 2.4 0.55 3.1 0.55 3.6 0.55 3.0 0.55 2.0 0.55 2.5 0.55 4.4 0.55 5.1 0.55 1.7 0.55 3.7 0.55 4.5 0.55 1.7 0.55 4.9 0.55 2.0 0.55 3.9 0.55 3.7 0.55 4.0 0.55 2.7 0.55" opacity="0.36"/><path d="M13.0 121.94H101.4" stroke="#444" stroke-width="1.15" stroke-dasharray="3.2 0.55 3.8 0.55 3.2 0.55 4.1 0.55 3.3 0.55 3.3 0.55 1.6 0.55 4.0 0.55 3.5 0.55 2.4 0.55 4.6 0.55 4.6 0.55 3.3 0.55 2.2 0.55 3.4 0.55 1.9 0.55 2.0 0.55 3.2 0.55 1.9 0.55 3.3 0.55 3.5 0.55 1.7 0.55 4.0 0.55 1.8 0.55 4.4 0.55" opacity="0.36"/><path d="M13.0 124.75H101.4" stroke="#444" stroke-width="1.15" stroke-dasharray="4.6 0.55 3.5 0.55 1.7 0.55 3.5 0.55 3.0 0.55 5.3 0.55 2.0 0.55 4.9 0.55 5.5 0.55 4.4 0.55 4.8 0.55 2.3 0.55 5.4 0.55 3.5 0.55 5.3 0.55 5.2 0.55 2.2 0.55 4.7 0.55 5.2 0.55 1.8 0.55" opacity="0.36"/><path d="M13.0 127.56H101.4" stroke="#444" stroke-width="1.15" stroke-dasharray="2.9 0.55 4.5 0.55 2.1 0.55 5.1 0.55 2.6 0.55 4.8 0.55 2.1 0.55 3.5 0.55 5.2 0.55 2.3 0.55 2.6 0.55 3.5 0.55 2.8 0.55 1.6 0.55 2.2 0.55 2.1 0.55 5.2 0.55 4.2 0.55 5.1 0.55 2.2 0.55 4.6 0.55 2.0 0.55 3.6 0.55" opacity="0.36"/><path d="M13.0 130.37H101.4" stroke="#444" stroke-width="1.15" stroke-dasharray="4.0 0.55 2.9 0.55 5.0 0.55 3.7 0.55 3.8 0.55 5.0 0.55 1.9 0.55 5.5 0.55 4.0 0.55 3.1 0.55 4.7 0.55 2.6 0.55 5.5 0.55 3.8 0.55 2.9 0.55 4.6 0.55 3.3 0.55 2.2 0.55 4.5 0.55 1.7 0.55 4.8 0.55" opacity="0.36"/><path d="M13.0 133.18H101.4" stroke="#444" stroke-width="1.15" stroke-dasharray="2.5 0.55 4.1 0.55 5.4 0.55 3.8 0.55 4.2 0.55 2.8 0.55 1.5 0.55 1.6 0.55 2.1 0.55 4.0 0.55 3.2 0.55 3.6 0.55 5.1 0.55 2.0 0.55 2.4 0.55 4.1 0.55 1.6 0.55 1.5 0.55 2.9 0.55 1.9 0.55 2.9 0.55 2.4 0.55 3.8 0.55 3.9 0.55 2.3 0.55" opacity="0.36"/><path d="M13.0 135.99H79.3" stroke="#444" stroke-width="1.15" stroke-dasharray="4.0 0.55 3.4 0.55 2.0 0.55 5.2 0.55 2.5 0.55 2.1 0.55 1.9 0.55 4.1 0.55 5.0 0.55 4.6 0.55 3.1 0.55 2.6 0.55 1.5 0.55 4.1 0.55 3.7 0.55 2.9 0.55 4.1 0.55 3.3 0.55" opacity="0.36"/><path d="M13.0 140.90H102.0" stroke="#444" stroke-width="1.15" stroke-dasharray="5.2 0.55 4.4 0.55 2.5 0.55 5.1 0.55 1.7 0.55 3.6 0.55 3.1 0.55 2.5 0.55 1.7 0.55 4.6 0.55 1.5 0.55 3.7 0.55 5.3 0.55 2.1 0.55 2.3 0.55 3.9 0.55 3.5 0.55 4.1 0.55 4.8 0.55 2.2 0.55 2.7 0.55 2.7 0.55 1.7 0.55 5.1 0.55" opacity="0.36"/><path d="M13.0 143.60H102.0" stroke="#444" stroke-width="1.15" stroke-dasharray="4.6 0.55 4.4 0.55 1.5 0.55 4.9 0.55 4.5 0.55 3.4 0.55 4.5 0.55 3.3 0.55 2.4 0.55 1.9 0.55 2.4 0.55 1.7 0.55 2.8 0.55 4.5 0.55 4.3 0.55 4.9 0.55 4.3 0.55 2.6 0.55 3.7 0.55 3.2 0.55 4.7 0.55 3.6 0.55" opacity="0.36"/><path d="M13.0 146.30H102.0" stroke="#444" stroke-width="1.15" stroke-dasharray="2.6 0.55 4.1 0.55 5.4 0.55 2.4 0.55 5.0 0.55 1.6 0.55 2.5 0.55 2.4 0.55 4.5 0.55 5.3 0.55 4.5 0.55 2.8 0.55 5.0 0.55 2.8 0.55 2.5 0.55 5.1 0.55 4.0 0.55 4.3 0.55 4.2 0.55 5.4 0.55 3.4 0.55" opacity="0.36"/><path d="M13.0 149.00H102.0" stroke="#444" stroke-width="1.15" stroke-dasharray="4.9 0.55 4.3 0.55 4.9 0.55 3.2 0.55 4.4 0.55 3.8 0.55 2.7 0.55 2.3 0.55 4.0 0.55 1.8 0.55 5.1 0.55 2.1 0.55 1.6 0.55 1.9 0.55 5.2 0.55 2.9 0.55 2.1 0.55 1.6 0.55 1.7 0.55 4.3 0.55 4.0 0.55 4.3 0.55 4.4 0.55" opacity="0.36"/><path d="M13.0 151.70H97.5" stroke="#444" stroke-width="1.15" stroke-dasharray="1.8 0.55 3.9 0.55 3.0 0.55 4.8 0.55 4.8 0.55 5.1 0.55 1.8 0.55 5.0 0.55 5.2 0.55 5.3 0.55 1.9 0.55 2.3 0.55 1.9 0.55 1.6 0.55 4.9 0.55 4.7 0.55 4.0 0.55 4.8 0.55 4.0 0.55 2.6 0.55 1.9 0.55" opacity="0.36"/></svg>
</div>
<div style="left:360px;top:56px;width:171px;height:127px;background:#7c7c7c;border:1px solid #0c0c0c;"></div>
<div style="left:363px;top:59px;width:165px;height:121px;background:#0c0c0c;"></div>
<div class="clip" style="left:364px;top:60px;width:163px;height:119px;background:#ffffff;">
<div style="left:0px;top:0px;width:82px;height:119px;background:#808080;"></div>
<span class="t" style="left:7.50px;top:8.40px;font-size:3.2px;line-height:3.2px;color:#e4e4e4;letter-spacing:-0.128px;">Chapter 14</span>
<div style="left:7.5px;top:12.599999999999994px;width:66px;height:0.6px;background:#a4a4a4;"></div>
<span class="t" style="left:7.50px;top:15.20px;font-size:5.6px;line-height:5.6px;color:#f4f4f4;font-weight:700;letter-spacing:0.020px;">Securing Forms &amp;</span>
<span class="t" style="left:7.50px;top:20.20px;font-size:5.6px;line-height:5.6px;color:#f4f4f4;font-weight:700;letter-spacing:0.068px;">Copyright Protection</span>
<div style="left:7.5px;top:51.19999999999999px;width:66px;height:0.6px;background:#a4a4a4;"></div>
<span class="t" style="left:7.50px;top:55.50px;font-size:3px;line-height:3px;color:#eaeaea;font-weight:700;letter-spacing:-0.069px;">Adding security to forms to prevent users from</span>
<span class="t" style="left:7.50px;top:59.50px;font-size:3px;line-height:3px;color:#eaeaea;font-weight:700;letter-spacing:-0.091px;">changing the form. Should you copyright your</span>
<span class="t" style="left:7.50px;top:63.50px;font-size:3px;line-height:3px;color:#eaeaea;font-weight:700;letter-spacing:-0.195px;">forms?</span>
<svg style="left:92px;top:15px;" width="62" height="76" viewBox="0 0 62 76"><defs><linearGradient id="shk" x1="0" x2="1"><stop offset="0" stop-color="#8a8f98"/><stop offset="0.25" stop-color="#e8eaee"/><stop offset="0.55" stop-color="#5a5f6a"/><stop offset="1" stop-color="#9aa0aa"/></linearGradient>
<linearGradient id="bdy" x1="0" x2="0" y1="0" y2="1"><stop offset="0" stop-color="#d9c48a"/><stop offset="0.5" stop-color="#ccb57a"/><stop offset="1" stop-color="#b79d5e"/></linearGradient></defs>
<ellipse cx="31" cy="66.5" rx="24" ry="2.2" fill="#cfc7b4" opacity="0.8"/>
<path d="M15.5 36V23.6A15.5 15.5 0 0 1 46.5 23.6V36" fill="none" stroke="url(#shk)" stroke-width="4.2"/>
<rect x="12" y="33.5" width="38.5" height="32.5" rx="2" fill="url(#bdy)"/>
<rect x="12" y="33.5" width="38.5" height="2.2" rx="1" fill="#e8dcae"/>
<path d="M13 42H50M13 47H50M13 52H50M13 57H50M13 62H50" stroke="#bea768" stroke-width="0.8" opacity="0.7"/></svg>
</div>
<div style="left:562px;top:34px;width:123px;height:171px;background:#4f9f4f;border:1px solid #0c0c0c;"></div>
<div style="left:565px;top:37px;width:117px;height:165px;background:#0c0c0c;"></div>
<div class="clip" style="left:566px;top:38px;width:115px;height:163px;background:#ffffff;">
<span class="t" style="left:10.70px;top:10.55px;font-size:3.9px;line-height:3.9px;color:#555;letter-spacing:-0.135px;">Thank you for downloading the The Screens Version 4 by</span>
<span class="t" style="left:10.70px;top:14.55px;font-size:3.9px;line-height:3.9px;color:#333;font-weight:700;letter-spacing:-0.176px;">Tran Mau Tri Tam from behance.net/tranmautritam |</span>
<span class="t" style="left:10.70px;top:19.55px;font-size:3.9px;line-height:3.9px;color:#333;font-weight:700;letter-spacing:-0.118px;">tneui.design | dribbble.com/tranmautritam</span>
<span class="t" style="left:10.70px;top:31.50px;font-size:5px;line-height:5px;color:#222;font-weight:700;letter-spacing:-0.187px;">Free Files License</span>
<svg style="left:0px;top:0px;filter:blur(0.3px);" width="115" height="163" viewBox="0 0 115 163"><path d="M10.7 41.90H101.5" stroke="#555" stroke-width="1.0" stroke-dasharray="1.9 0.55 4.5 0.55 2.3 0.55 2.8 0.55 3.2 0.55 1.6 0.55 2.5 0.55 2.6 0.55 4.4 0.55 3.0 0.55 2.8 0.55 5.4 0.55 3.5 0.55 4.9 0.55 4.0 0.55 1.6 0.55 3.2 0.55 3.2 0.55 4.6 0.55 2.9 0.55 4.3 0.55 3.7 0.55 2.4 0.55 4.9 0.55" opacity="0.36"/><path d="M10.7 44.70H101.5" stroke="#555" stroke-width="1.0" stroke-dasharray="1.9 0.55 4.8 0.55 2.2 0.55 1.5 0.55 2.3 0.55 4.5 0.55 5.4 0.55 1.5 0.55 3.5 0.55 3.5 0.55 4.7 0.55 2.2 0.55 3.5 0.55 2.9 0.55 4.8 0.55 2.5 0.55 5.3 0.55 2.6 0.55 2.4 0.55 4.3 0.55 3.5 0.55 1.9 0.55 4.0 0.55 1.8 0.55 4.7 0.55" opacity="0.36"/><path d="M10.7 47.60H92.4" stroke="#555" stroke-width="1.0" stroke-dasharray="4.3 0.55 4.6 0.55 4.0 0.55 2.9 0.55 3.1 0.55 3.1 0.55 5.1 0.55 1.8 0.55 5.1 0.55 1.6 0.55 2.3 0.55 2.6 0.55 5.1 0.55 3.5 0.55 3.0 0.55 5.0 0.55 2.4 0.55 3.3 0.55 3.6 0.55 4.5 0.55" opacity="0.36"/><path d="M10.7 53.10H102.0" stroke="#555" stroke-width="1.0" stroke-dasharray="4.5 0.55 4.1 0.55 2.9 0.55 2.8 0.55 2.1 0.55 4.9 0.55 4.1 0.55 4.5 0.55 2.2 0.55 3.3 0.55 4.6 0.55 3.8 0.55 2.0 0.55 3.3 0.55 5.0 0.55 2.5 0.55 2.3 0.55 2.7 0.55 4.3 0.55 4.9 0.55 2.1 0.55 2.1 0.55 2.5 0.55 2.8 0.55" opacity="0.36"/><path d="M10.7 58.70H104.0" stroke="#555" stroke-width="1.0" stroke-dasharray="3.6 0.55 2.1 0.55 2.8 0.55 2.3 0.55 5.4 0.55 4.4 0.55 1.9 0.55 5.3 0.55 1.9 0.55 3.0 0.55 5.4 0.55 4.7 0.55 4.4 0.55 3.2 0.55 2.3 0.55 4.1 0.55 1.9 0.55 2.3 0.55 3.1 0.55 1.6 0.55 3.1 0.55 4.7 0.55 4.3 0.55 3.5 0.55" opacity="0.36"/><path d="M10.7 61.50H52.7" stroke="#555" stroke-width="1.0" stroke-dasharray="4.0 0.55 3.4 0.55 2.1 0.55 3.9 0.55 3.1 0.55 4.5 0.55 5.1 0.55 3.2 0.55 3.8 0.55 4.5 0.55" opacity="0.36"/><path d="M10.7 66.90H102.0" stroke="#555" stroke-width="1.0" stroke-dasharray="3.2 0.55 2.4 0.55 4.4 0.55 5.0 0.55 4.6 0.55 4.3 0.55 4.9 0.55 4.2 0.55 4.1 0.55 3.3 0.55 2.8 0.55 4.0 0.55 1.9 0.55 3.2 0.55 4.6 0.55 4.4 0.55 4.0 0.55 2.5 0.55 3.2 0.55 3.3 0.55 4.0 0.55 3.1 0.55" opacity="0.36"/><path d="M10.7 69.70H102.0" stroke="#555" stroke-width="1.0" stroke-dasharray="4.2 0.55 5.2 0.55 2.2 0.55 4.1 0.55 4.6 0.55 3.1 0.55 3.5 0.55 5.4 0.55 1.7 0.55 3.7 0.55 2.1 0.55 4.6 0.55 5.3 0.55 3.6 0.55 1.9 0.55 3.8 0.55 3.7 0.55 4.4 0.55 3.5 0.55 4.1 0.55 4.8 0.55 3.6 0.55" opacity="0.36"/><path d="M10.7 72.50H72.8" stroke="#555" stroke-width="1.0" stroke-dasharray="3.1 0.55 5.3 0.55 2.3 0.55 4.2 0.55 3.1 0.55 4.6 0.55 2.0 0.55 5.4 0.55 2.9 0.55 1.7 0.55 2.6 0.55 3.1 0.55 1.6 0.55 3.2 0.55 3.2 0.55 4.3 0.55 2.9 0.55" opacity="0.36"/></svg>
<span class="t" style="left:10.70px;top:77.50px;font-size:5px;line-height:5px;color:#222;font-weight:700;letter-spacing:-0.193px;">We Recommend</span>
<span class="t" style="left:10.70px;top:87.30px;font-size:3.4px;line-height:3.4px;color:#222;font-weight:700;letter-spacing:-0.155px;">• Download Canis WordPress Theme [TOP NEW PRODUCT]</span>
<span class="t" style="left:10.70px;top:91.30px;font-size:3.4px;line-height:3.4px;color:#222;font-weight:700;letter-spacing:-0.156px;">• Download Theline WordPress Theme</span>
<span class="t" style="left:10.70px;top:95.30px;font-size:3.4px;line-height:3.4px;color:#222;font-weight:700;letter-spacing:-0.156px;">• Download Best Selling PSD Template / Theline PSD</span>
<span class="t" style="left:10.70px;top:102.50px;font-size:5px;line-height:5px;color:#222;font-weight:700;letter-spacing:-0.158px;">Contact Information</span>
<span class="t" style="left:10.70px;top:111.20px;font-size:2.6px;line-height:2.6px;color:#222;font-weight:700;letter-spacing:-0.107px;">Dribbble · Behance · Facebook · Twitter · ThemeForest · Instagram</span>
<svg style="left:0px;top:0px;filter:blur(0.3px);" width="115" height="163" viewBox="0 0 115 163"><path d="M10.7 117.20H77.0" stroke="#333" stroke-width="1.1" stroke-dasharray="2.6 0.55 2.4 0.55 4.5 0.55 5.3 0.55 3.6 0.55 2.4 0.55 4.7 0.55 3.1 0.55 2.3 0.55 2.0 0.55 4.6 0.55 4.7 0.55 4.0 0.55 3.4 0.55 3.7 0.55 2.4 0.55 5.4 0.55" opacity="0.55"/><path d="M10.7 120.40H71.0" stroke="#333" stroke-width="1.1" stroke-dasharray="2.9 0.55 4.1 0.55 4.8 0.55 4.8 0.55 3.4 0.55 2.7 0.55 3.7 0.55 2.0 0.55 4.8 0.55 2.9 0.55 4.9 0.55 2.6 0.55 3.0 0.55 2.5 0.55 3.2 0.55" opacity="0.55"/><path d="M10.7 126.30H63.0" stroke="#333" stroke-width="1.1" stroke-dasharray="2.2 0.55 1.5 0.55 4.4 0.55 2.6 0.55 2.5 0.55 2.7 0.55 3.4 0.55 3.2 0.55 4.0 0.55 4.1 0.55 2.9 0.55 5.2 0.55 4.9 0.55 1.7 0.55" opacity="0.55"/></svg>
<span class="t" style="left:10.70px;top:130.50px;font-size:5px;line-height:5px;color:#222;font-weight:700;letter-spacing:-0.159px;">Donate</span>
<svg style="left:0px;top:0px;filter:blur(0.3px);" width="115" height="163" viewBox="0 0 115 163"><path d="M10.7 140.10H84.0" stroke="#333" stroke-width="1.1" stroke-dasharray="4.8 0.55 5.1 0.55 4.6 0.55 2.1 0.55 4.8 0.55 4.0 0.55 1.6 0.55 1.5 0.55 5.3 0.55 4.1 0.55 2.5 0.55 1.9 0.55 2.1 0.55 2.4 0.55 4.6 0.55 2.9 0.55 2.1 0.55 5.1 0.55 4.7 0.55" opacity="0.55"/></svg>
</div>
<div style="left:737px;top:34px;width:130px;height:171px;background:#7c7c7c;border:1px solid #0c0c0c;"></div>
<div style="left:740px;top:37px;width:124px;height:165px;background:#0c0c0c;"></div>
<div class="clip" style="left:741px;top:38px;width:122px;height:163px;background:#5d9682;">
<div class="clip" style="left:7.400000000000091px;top:8.699999999999989px;width:23.6px;height:25.7px;background:linear-gradient(#504c28,#66622f 60%,#8c8a3c);">
<div style="left:1.5px;top:6px;width:4.5px;height:15px;background:#e4dcd0;border-radius:40%;filter:blur(0.7px);"></div><div style="left:2px;top:3px;width:3.5px;height:3.5px;background:#d8b8a0;border-radius:50%;filter:blur(0.7px);"></div><div style="left:8px;top:5px;width:6px;height:13px;background:#2c3050;border-radius:40%;filter:blur(0.7px);"></div><div style="left:9px;top:2.5px;width:3.5px;height:3.5px;background:#5a4a40;border-radius:50%;filter:blur(0.7px);"></div><div style="left:12px;top:13px;width:5px;height:10px;background:#b87898;border-radius:40%;filter:blur(0.7px);"></div><div style="left:16px;top:5px;width:5px;height:14px;background:#44508a;border-radius:40%;filter:blur(0.7px);"></div><div style="left:17px;top:2.5px;width:3.5px;height:3.5px;background:#c8a088;border-radius:50%;filter:blur(0.7px);"></div><div style="left:4px;top:0px;width:8px;height:4px;background:#a89a58;border-radius:50%;filter:blur(0.7px);"></div>
</div>
<div class="clip" style="left:33.799999999999955px;top:8.699999999999989px;width:23.6px;height:25.7px;background:#2a3020;">
<div style="left:5px;top:4px;width:15px;height:20px;background:#6c5238;border-radius:45%;filter:blur(0.7px);"></div><div style="left:8px;top:8px;width:8px;height:11px;background:#84684a;border-radius:45%;filter:blur(0.7px);"></div><div style="left:0px;top:13px;width:6px;height:9px;background:#5a7a3a;border-radius:50%;filter:blur(0.7px);"></div><div style="left:0px;top:17px;width:4px;height:4px;background:#d8d8d0;border-radius:50%;filter:blur(0.7px);"></div><div style="left:17px;top:1px;width:5px;height:6px;background:#486030;border-radius:50%;filter:blur(0.7px);"></div><div style="left:15px;top:21px;width:5px;height:3px;background:#c8c8c0;border-radius:50%;filter:blur(0.7px);"></div>
</div>
<div class="clip" style="left:60.200000000000045px;top:8.699999999999989px;width:23.6px;height:25.7px;background:#18241f;">
<div style="left:4.2px;top:5.2px;width:13.2px;height:13.2px;background:radial-gradient(#f0eee6,#d8d4c8 65%,#a8a498);border-radius:50%;filter:blur(0.7px);"></div>
</div>
<div class="clip" style="left:86.59999999999991px;top:8.699999999999989px;width:23.6px;height:25.7px;background:linear-gradient(170deg,#94ac34,#84a030 60%,#6e8c34);">
<div style="left:2px;top:4px;width:11px;height:8px;background:#3a3230;border-radius:50%;filter:blur(0.7px);transform:rotate(30deg);"></div><div style="left:9px;top:9px;width:12px;height:12px;background:#5a463c;border-radius:50%;filter:blur(0.7px);"></div><div style="left:12px;top:12px;width:7px;height:8px;background:#7a6458;border-radius:50%;filter:blur(0.7px);"></div>
</div>
<div class="clip" style="left:7.400000000000091px;top:67px;width:23.6px;height:25.7px;background:linear-gradient(#f4f2ee 22%,#c8b8a0 55%,#c0a890);">
<div style="left:8px;top:3px;width:16px;height:20px;background:#5e544e;border-radius:6%;filter:blur(0.7px);"></div><div style="left:6px;top:1px;width:16px;height:8px;background:#4a4440;border-radius:20% 20% 0 0;filter:blur(0.7px);transform:skewX(-25deg);"></div><div style="left:11px;top:8px;width:2.5px;height:5px;background:#e4e0dc;border-radius:0;filter:blur(0.7px);"></div><div style="left:16px;top:8px;width:2.5px;height:5px;background:#e4e0dc;border-radius:0;filter:blur(0.7px);"></div><div style="left:10px;top:15px;width:10px;height:2.5px;background:#e0dcd4;border-radius:0;filter:blur(0.7px);"></div><div style="left:0px;top:5px;width:7px;height:16px;background:#9c7c58;border-radius:30%;filter:blur(0.7px);"></div><div style="left:0px;top:20px;width:24px;height:6px;background:#d4c0a8;border-radius:0;filter:blur(0.7px);"></div>
</div>
<div class="clip" style="left:33.799999999999955px;top:67px;width:23.6px;height:25.7px;background:linear-gradient(#5a4232 0%,#8c4c4c 28%,#b05a62 55%,#a04c56);">
<div style="left:3px;top:10px;width:18px;height:5px;background:#dcb8b4;border-radius:50%;filter:blur(0.7px);"></div><div style="left:14px;top:11px;width:8px;height:3px;background:#f0e0dc;border-radius:50%;filter:blur(0.7px);"></div><div style="left:0px;top:20px;width:24px;height:6px;background:#a84458;border-radius:0;filter:blur(0.7px);"></div>
</div>
<div class="clip" style="left:60.200000000000045px;top:67px;width:23.6px;height:25.7px;background:#5e3226;">
<div style="left:1px;top:4px;width:9px;height:12px;background:#c4423a;border-radius:50%;filter:blur(0.7px);"></div><div style="left:10px;top:3px;width:7px;height:7px;background:#9a3a30;border-radius:50%;filter:blur(0.7px);"></div><div style="left:11px;top:12px;width:13px;height:13px;background:#6c9c3a;border-radius:40%;filter:blur(0.7px);"></div><div style="left:0px;top:17px;width:8px;height:9px;background:#48402a;border-radius:50%;filter:blur(0.7px);"></div><div style="left:17px;top:0px;width:7px;height:6px;background:#3a4a24;border-radius:50%;filter:blur(0.7px);"></div>
</div>
<div class="clip" style="left:86.59999999999991px;top:67px;width:23.6px;height:25.7px;background:linear-gradient(#e8c8b8,#e0d0c0);">
<div style="left:2px;top:4px;width:20px;height:17px;background:#c08830;border-radius:50%;filter:blur(0.7px);"></div><div style="left:9px;top:6px;width:12px;height:11px;background:#8a5424;border-radius:50%;filter:blur(0.7px);"></div><div style="left:3px;top:8px;width:8px;height:9px;background:#d8a448;border-radius:50%;filter:blur(0.7px);"></div><div style="left:0px;top:21px;width:24px;height:5px;background:#ecdcd0;border-radius:0;filter:blur(0.7px);"></div>
</div>
<div class="clip" style="left:7.400000000000091px;top:124.69999999999999px;width:23.6px;height:25.7px;background:linear-gradient(#a4b0cc,#ccd2dc 55%,#8a8c84 70%,#1c1e12 76%);">
<div style="left:3px;top:3px;width:18px;height:15px;background:#34362a;border-radius:50%;filter:blur(0.7px);"></div><div style="left:10px;top:15px;width:3px;height:6px;background:#2a2a20;border-radius:0;filter:blur(0.7px);"></div><div style="left:0px;top:19px;width:24px;height:7px;background:#1a1c10;border-radius:0;filter:blur(0.7px);"></div><div style="left:0px;top:13px;width:6px;height:4px;background:#3a3c30;border-radius:50%;filter:blur(0.7px);"></div>
</div>
<div class="clip" style="left:33.799999999999955px;top:124.69999999999999px;width:23.6px;height:25.7px;background:linear-gradient(#8c9494 35%,#7a6a58);">
<div style="left:15.5px;top:0px;width:3px;height:10px;background:#3a3e40;border-radius:0;filter:blur(0.7px);"></div><div style="left:20px;top:0px;width:3.5px;height:10px;background:#44484a;border-radius:0;filter:blur(0.7px);"></div><div style="left:0px;top:0px;width:4px;height:8px;background:#b0b8b8;border-radius:0;filter:blur(0.7px);"></div><div style="left:5px;top:10px;width:10px;height:10px;background:#dcb4a4;border-radius:50%;filter:blur(0.7px);"></div><div style="left:14px;top:9px;width:9px;height:9px;background:#e8d8c4;border-radius:50%;filter:blur(0.7px);"></div><div style="left:13px;top:17px;width:10px;height:9px;background:#d8d0cc;border-radius:50%;filter:blur(0.7px);"></div><div style="left:0px;top:12px;width:6px;height:9px;background:#e4ccc0;border-radius:50%;filter:blur(0.7px);"></div><div style="left:2px;top:20px;width:9px;height:6px;background:#a8846a;border-radius:50%;filter:blur(0.7px);"></div>
</div>
<div class="clip" style="left:60.200000000000045px;top:124.69999999999999px;width:23.6px;height:25.7px;background:linear-gradient(90deg,#e4662a,#ec7030 40%,#e86428 70%,#e06028);">

</div>
<div class="clip" style="left:86.59999999999991px;top:124.69999999999999px;width:23.6px;height:25.7px;background:linear-gradient(#8a8270,#a09484 40%,#94887a);">
<div style="left:6px;top:11px;width:13px;height:4px;background:#6e6254;border-radius:50%;filter:blur(0.7px);transform:rotate(25deg);"></div><div style="left:3px;top:4px;width:18px;height:2px;background:#b0a696;border-radius:50%;filter:blur(0.7px);"></div><div style="left:2px;top:18px;width:18px;height:2px;background:#b4a898;border-radius:50%;filter:blur(0.7px);"></div>
</div>
<span class="t" style="left:38.30px;top:37.80px;font-size:12.4px;line-height:12.4px;color:#e4f0ec;letter-spacing:-0.083px;">Das Versteck</span>
<span class="t" style="left:66.80px;top:52.80px;font-size:12.4px;line-height:12.4px;color:#e4f0ec;letter-spacing:-0.114px;">im Wald</span>
<span class="t" style="left:30.30px;top:106.40px;font-size:5.2px;line-height:5.2px;color:#d4e6de;letter-spacing:0.029px;">Drei Detektive verfolgen eine Spur</span>
</div>
<div style="left:6px;top:338px;width:167px;height:167px;background:#7c7c7c;border:1px solid #0c0c0c;"></div>
<div style="left:9px;top:341px;width:161px;height:161px;background:#0c0c0c;"></div>
<div class="clip" style="left:10px;top:342px;width:159px;height:159px;background:#3e3e3e;">
<div style="left:34px;top:21px;width:91px;height:119px;background:#2a2a2a;filter:blur(2.5px);opacity:0.8;"></div>
<svg style="left:32px;top:18px;" width="92" height="120" viewBox="0 0 92 120"><defs><linearGradient id="pg" x1="0" x2="0" y1="0" y2="1"><stop offset="0" stop-color="#ffffff"/><stop offset="1" stop-color="#f2f2f2"/></linearGradient>
<linearGradient id="curl" x1="0" y1="0" x2="1" y2="1"><stop offset="0" stop-color="#c8c8c8"/><stop offset="0.5" stop-color="#ffffff"/><stop offset="1" stop-color="#e8e8e8"/></linearGradient></defs>
<path d="M0.3 0.5H91V100Q91 112 76 117Q70 119.3 62 119.3H0.3Z" fill="url(#pg)"/>
<path d="M0.3 16.5H91M0.3 21.9H91M0.3 27.3H91M0.3 32.7H91M0.3 38.1H91M0.3 43.5H91M0.3 48.9H91M0.3 54.3H91M0.3 59.7H91M0.3 65.1H91M0.3 70.5H91M0.3 75.9H91M0.3 81.3H91M0.3 86.7H91M0.3 92.1H91M0.3 97.5H91M0.3 102.9H89M0.3 108.3H84M0.3 113.7H74" stroke="#e2e5ea" stroke-width="0.8"/>
<path d="M91 96Q88 102 78 103Q76 112 62 119.3Q82 118 88 108Q91 103 91 96Z" fill="url(#curl)"/>
<g fill="#1c1c1c"><ellipse cx="8.3" cy="4.2" rx="1.7" ry="2"/><rect x="7.8" y="0" width="2.3" height="3.4" transform="rotate(18 8.3 3)"/><ellipse cx="16.7" cy="4.2" rx="1.7" ry="2"/><rect x="16.2" y="0" width="2.3" height="3.4" transform="rotate(18 16.7 3)"/><ellipse cx="25.1" cy="4.2" rx="1.7" ry="2"/><rect x="24.6" y="0" width="2.3" height="3.4" transform="rotate(18 25.1 3)"/><ellipse cx="33.5" cy="4.2" rx="1.7" ry="2"/><rect x="33.0" y="0" width="2.3" height="3.4" transform="rotate(18 33.5 3)"/><ellipse cx="41.9" cy="4.2" rx="1.7" ry="2"/><rect x="41.4" y="0" width="2.3" height="3.4" transform="rotate(18 41.9 3)"/><ellipse cx="50.3" cy="4.2" rx="1.7" ry="2"/><rect x="49.8" y="0" width="2.3" height="3.4" transform="rotate(18 50.3 3)"/><ellipse cx="58.7" cy="4.2" rx="1.7" ry="2"/><rect x="58.2" y="0" width="2.3" height="3.4" transform="rotate(18 58.7 3)"/><ellipse cx="67.1" cy="4.2" rx="1.7" ry="2"/><rect x="66.6" y="0" width="2.3" height="3.4" transform="rotate(18 67.1 3)"/><ellipse cx="75.5" cy="4.2" rx="1.7" ry="2"/><rect x="75.0" y="0" width="2.3" height="3.4" transform="rotate(18 75.5 3)"/><ellipse cx="83.9" cy="4.2" rx="1.7" ry="2"/><rect x="83.4" y="0" width="2.3" height="3.4" transform="rotate(18 83.9 3)"/></g></svg>
</div>
<div style="left:182px;top:372px;width:171px;height:99px;background:#7c7c7c;border:1px solid #0c0c0c;"></div>
<div style="left:185px;top:375px;width:165px;height:93px;background:#0c0c0c;"></div>
<div class="clip" style="left:186px;top:376px;width:163px;height:91px;background:#fde3d6;">
<svg style="left:0px;top:0px;" width="163" height="91" viewBox="0 0 163 91"><path d="M105 0Q108 6 118 8Q128 10 136 16Q146 24 163 28V0Z" fill="#fffaf8"/>
<path d="M0 74Q14 70 26 74Q38 80 48 84Q62 90 72 84Q84 79 95 91H0Z" fill="#fffaf8"/>
<g fill="#ee9a6a"><path d="M121 9Q124 3 130 2Q131 7 128 10Q125 13 122 13Z"/><path d="M120 10L126 8L122 14Z"/>
<path d="M137 6L150 3L142 10L146 12L140 12L137 16L136 10Z"/>
<ellipse cx="157" cy="24" rx="4.5" ry="5.5"/><path d="M152 22L157 17L161 22Z"/>
<path d="M2 66Q1 58 5 60Q9 64 7 76Q6 84 4 90Z"/><path d="M6 88Q10 72 17 70Q19 74 14 82Q10 88 6 90Z"/><path d="M5 90Q12 84 22 85Q24 88 16 90Z"/></g>
<g fill="#4c3e72"><path d="M154 10L147 6L154 7L152 1L157 6L161 3L160 8L163 10L158 11L159 16L155 12L150 14Z"/>
<path d="M149 35L158 36L152 39L156 42L150 40L148 44L148 38Z"/>
<path d="M34 82L29 79L34 80L33 75L37 79L41 77L39 81L42 83L38 84L38 88L35 85L31 87Z"/></g>
<g fill="#e05a78"><path d="M42 82L46 76L48 79L51 74L52 78L55 75L54 81L50 86L46 84Z"/></g>
<g fill="#5a3c4c"><circle cx="10" cy="55" r="0.9"/><circle cx="13" cy="54.5" r="0.9"/><circle cx="16" cy="56" r="0.9"/><circle cx="8.5" cy="59" r="0.9"/><circle cx="17.5" cy="59.5" r="0.9"/><circle cx="16" cy="63" r="0.9"/></g>
<path d="M12.5 66L10 56M12.5 66L13 55.5M12.5 66L15.5 57M12.5 66L9 60M12.5 66L17 60" stroke="#e8a890" stroke-width="0.5"/></svg>
<span class="t" style="left:38.65px;top:28.50px;font-size:11px;line-height:11px;color:#dc6b7c;letter-spacing:0.181px;">THANKSGIVING</span>
<span class="t" style="left:43.05px;top:40.50px;font-size:11px;line-height:11px;color:#dc6b7c;letter-spacing:0.211px;">NEWSLETTER</span>
<span class="t" style="left:45.55px;top:59.20px;font-size:3.6px;line-height:3.6px;color:#3c3030;font-weight:700;letter-spacing:0.110px;">Here is where your presentation begins</span>
</div>
<div style="left:360px;top:372px;width:171px;height:99px;background:#7c7c7c;border:1px solid #0c0c0c;"></div>
<div style="left:363px;top:375px;width:165px;height:93px;background:#0c0c0c;"></div>
<div class="clip" style="left:364px;top:376px;width:163px;height:91px;background:radial-gradient(ellipse at 50% 50%,#245458 0%,#1f4c50 55%,#173c40 100%);">
<svg style="left:0px;top:0px;" width="163" height="91" viewBox="0 0 163 91"><g stroke="#e4f2ee" stroke-width="0.85" fill="none" opacity="0.9">
<circle cx="29" cy="22" r="5.5" stroke="#e0b890" fill="#c89a6a" fill-opacity="0.55"/><path d="M29 16.5Q30 13 32 12"/>
<path d="M40 14Q36 9 42 8Q48 10 47 16Q44 20 40 14Z"/>
<path d="M53 10Q50 16 54 24Q59 18 56 10Z"/><path d="M54 11V23"/>
<circle cx="59" cy="6" r="2.6"/><circle cx="59" cy="6" r="0.8"/>
<path d="M68 7L62 25M68 7L74 25M64.5 19H71.5"/><circle cx="68" cy="6" r="1.3"/>
<path d="M73 10Q75 6 77 10Q79 6 81 10Q79 14 77 17Q74 13 73 10Z"/>
<path d="M82 12A8 8 0 1 1 88 27M82 12L84 17M88 27L91 22"/>
<path d="M95 7Q97 3 99 7Q99.5 10 97 12Q94.5 10 95 7Z"/>
<path d="M102 15Q102 10 105 10Q108 10 108 15V25Q108 28 105 28Q102 28 102 25V14"/>
<path d="M105 6L117 6L111 22Z"/>
<path d="M112 30Q110 34 113 35Q116 34 114 31V24L118 22"/>
<circle cx="126" cy="13" r="2.8"/><circle cx="122" cy="15" r="1.3"/><circle cx="130" cy="11" r="1.3"/>
<circle cx="135" cy="33" r="5.5" stroke="#a8a0e8" fill="#8078c8" fill-opacity="0.55"/><path d="M135 27.5Q136 24 139 22"/>
<path d="M116 39Q112 44 115 48Q120 46 119 40Q118 37 116 39Z"/>
<path d="M138 40H144M141 40V46L139.5 49M141 46L143 49"/>
<path d="M114 64A10.5 10.5 0 0 1 135 64ZM118 64A6.5 6.5 0 0 1 131 64"/><path d="M113 66.5H137"/>
<path d="M143 58L146 50L149 58M144.5 55.5H147.5"/>
<circle cx="149" cy="71" r="2.4"/>
<path d="M90 82L104 69Q112 66 118 72L135 69L122 86Q112 82 106 88ZM104 69L106 88"/>
<path d="M105 56L86 76L84 81L89 79L108 59Z"/>
<circle cx="63" cy="79" r="9.5" stroke="#f0b0a0" fill="#c87868" fill-opacity="0.45"/><path d="M54 76Q63 82 72 76M57 72Q63 88 69 72M63 69.5V88.5" stroke="#f0b0a0"/>
<path d="M74 62Q70 60 70 64Q72 66 74 68Q72 71 70 69M79 73V81Q85 80 82 77Q84 74 79 73"/>
<path d="M36 45L42 68L58 60ZM42 68L45 58L58 60"/>
<path d="M31 62L35 62L36 72L42 84Q36 88 28 84L32 72Z"/><circle cx="25" cy="69" r="3.5"/>
<circle cx="19" cy="56" r="3.2"/><circle cx="28" cy="53" r="3.2"/><path d="M22 55L25 54M31 51L33 44"/>
<circle cx="14" cy="42" r="2.8"/><circle cx="26" cy="38" r="2.6"/>
<circle cx="21" cy="32" r="2.2"/><circle cx="26" cy="29" r="2.2"/>
<ellipse cx="42" cy="33" rx="8.5" ry="10" transform="rotate(25 42 33)"/><circle cx="40" cy="28" r="1.2"/><circle cx="44" cy="27" r="1.2"/><circle cx="47" cy="31" r="1.2"/><circle cx="38" cy="33" r="1.2"/><circle cx="41" cy="39" r="1.6"/>
</g></svg>
<span class="t" style="left:51.65px;top:24.65px;font-size:10.7px;line-height:10.7px;color:#ecd38c;letter-spacing:0.160px;">CHALKBOA</span>
<span class="t" style="left:73.55px;top:36.65px;font-size:10.7px;line-height:10.7px;color:#ecd38c;letter-spacing:0.031px;">RD</span>
<span class="t" style="left:60.30px;top:50.60px;font-size:2.8px;line-height:2.8px;color:#b8d0cc;letter-spacing:0.076px;">Here is where your presentation</span>
<span class="t" style="left:77.30px;top:53.60px;font-size:2.8px;line-height:2.8px;color:#b8d0cc;letter-spacing:-0.042px;">begins</span>
</div>
<div style="left:567px;top:336px;width:115px;height:171px;background:#7c7c7c;border:1px solid #0c0c0c;"></div>
<div style="left:570px;top:339px;width:109px;height:165px;background:#0c0c0c;"></div>
<div class="clip" style="left:571px;top:340px;width:107px;height:163px;background:#0c1a3a;">
<div style="left:0px;top:0px;width:107px;height:10px;background:#0e1a38;"></div>
<div style="left:0px;top:9px;width:107px;height:0.8px;background:#a8924c;"></div>
<span class="t" style="left:60.50px;top:5.10px;font-size:3.8px;line-height:3.8px;color:#d8dce8;font-family:'Liberation Serif', serif;letter-spacing:0.409px;">Pride and Prejudice</span>
<div style="left:0px;top:10px;width:107px;height:53px;background:linear-gradient(#8598d6 0%,#8c9fda 35%,#aab8e2 70%,#ccd4ec 100%);"></div>
<svg style="left:0px;top:10px;" width="107" height="53" viewBox="0 0 107 53"><g fill="none" stroke="#e6ecf8" stroke-width="0.8" opacity="0.75">
<path d="M0 48Q20 40 34 22Q50 4 78 5Q86 10 88 30Q89 44 86 53"/>
<path d="M2 50Q24 42 38 25Q52 9 76 9Q83 14 85 32"/>
<path d="M8 51Q28 44 42 28Q54 14 74 13Q80 18 82 34"/>
<path d="M14 52Q32 46 46 31Q56 19 72 17Q77 22 79 36"/>
<path d="M84 44Q90 30 107 28M86 48Q92 36 107 34"/></g>
<path d="M0 48Q20 40 34 22Q50 4 78 5Q86 10 88 30Q89 44 86 53H0Z" fill="#dfe6f6" opacity="0.35"/>
<path d="M84 53Q90 32 107 28V53Z" fill="#eef2fb" opacity="0.55"/></svg>
<span class="t" style="left:33.30px;top:35.40px;font-size:11.2px;line-height:11.2px;color:#ffffff;font-family:'Liberation Serif', serif;letter-spacing:-0.096px;font-style:italic;">Bloom&#x27;s</span>
<span class="t" style="left:17.20px;top:44.75px;font-size:20.5px;line-height:20.5px;color:#14224a;font-family:'Liberation Serif', serif;letter-spacing:0.671px;">GUIDES</span>
<span class="t" style="left:30.70px;top:65.25px;font-size:3.5px;line-height:3.5px;color:#c8d0e4;font-family:'Liberation Serif', serif;letter-spacing:0.178px;">Comprehensive Research &amp; Study Guides</span>
<span class="t" style="left:43.00px;top:102.40px;font-size:4.2px;line-height:4.2px;color:#c8d0e4;font-family:'Liberation Serif', serif;letter-spacing:0.237px;">Jane Austen&#x27;s</span>
<span class="t" style="left:43.00px;top:109.40px;font-size:8.2px;line-height:8.2px;color:#f0f2f8;font-family:'Liberation Serif', serif;letter-spacing:0.094px;">Pride and</span>
<span class="t" style="left:43.00px;top:117.40px;font-size:8.2px;line-height:8.2px;color:#f0f2f8;font-family:'Liberation Serif', serif;letter-spacing:0.120px;">Prejudice</span>
<span class="t" style="left:43.00px;top:146.10px;font-size:3.8px;line-height:3.8px;color:#c0c8dc;font-family:'Liberation Serif', serif;letter-spacing:0.014px;">Introduction by Harold Bloom</span>
</div>
<div style="left:736px;top:336px;width:132px;height:171px;background:#7c7c7c;border:1px solid #0c0c0c;"></div>
<div style="left:739px;top:339px;width:126px;height:165px;background:#0c0c0c;"></div>
<div class="clip" style="left:740px;top:340px;width:124px;height:163px;background:linear-gradient(#f4f4f0 0%,#ecece6 24%,#d6d8c8 33%,#b4ba8c 41%,#9aa662 52%,#84984c 72%,#6e8a3c 100%);">
<svg style="left:0px;top:0px;" width="124" height="163" viewBox="0 0 124 163"><defs><radialGradient id="cmp"><stop offset="0" stop-color="#6a86c8"/><stop offset="0.7" stop-color="#2c4690"/><stop offset="0.86" stop-color="#22356e"/><stop offset="1" stop-color="#c8ccd4"/></radialGradient>
<radialGradient id="lid" cx="0.45" cy="0.35"><stop offset="0" stop-color="#f8fafc"/><stop offset="0.65" stop-color="#c4cad6"/><stop offset="1" stop-color="#8890a0"/></radialGradient>
<filter id="gn" x="0" y="0" width="100%" height="100%"><feTurbulence type="fractalNoise" baseFrequency="0.55 0.9" numOctaves="2" seed="4"/><feColorMatrix values="0 0 0 0 0.25  0 0 0 0 0.35  0 0 0 0 0.1  1.6 0 0 0 -0.55"/></filter><filter id="bl2"><feGaussianBlur stdDeviation="1.6"/></filter><filter id="bl1"><feGaussianBlur stdDeviation="0.8"/></filter></defs>
<g opacity="0.35" fill="#7c8c7a" filter="url(#bl1)"><path d="M4 56L9 28L14 56ZM16 58L22 24L28 58ZM84 54L89 20L94 54ZM95 56L101 26L107 56ZM108 58L113 32L118 58ZM30 54L34 34L38 54ZM60 54L64 38L68 54Z"/></g>
<rect x="0" y="60" width="30" height="103" fill="#5c7c30" opacity="0.45" filter="url(#bl2)"/>
<rect x="84" y="84" width="40" height="79" fill="#5c8030" opacity="0.5" filter="url(#bl2)"/>
<path d="M40 72Q60 66 88 72L70 96Q54 100 44 92Z" fill="#c4cca0" opacity="0.55" filter="url(#bl2)"/>
<path d="M27 66Q32 63 36 68Q36 90 44 104Q50 112 60 112L52 120Q36 112 30 92Q26 78 27 66Z" fill="#86623a" opacity="0.9" filter="url(#bl1)"/>
<path d="M121 61L124 71Q90 84 66 109L57 102Q84 79 121 61Z" fill="#ccb022" opacity="0.95" filter="url(#bl1)"/>
<rect x="0" y="58" width="124" height="105" filter="url(#gn)" opacity="0.55"/>
<path d="M12 163Q15 142 24 128Q30 121 36 124Q44 112 56 106Q62 102 66 105Q72 102 76 108Q82 112 82 122Q85 140 78 163Z" fill="#e2b492"/>
<path d="M24 128Q30 121 36 124Q40 128 36 134" stroke="#c08c6c" stroke-width="0.9" fill="none"/>
<path d="M66 105Q70 110 70 116M76 108Q78 114 77 120" stroke="#c89878" stroke-width="0.8" fill="none"/>
<ellipse cx="57" cy="149" rx="15.2" ry="13.5" fill="url(#lid)"/>
<circle cx="59.8" cy="123.6" r="12.8" fill="#b8bcc8"/><circle cx="59.8" cy="123.6" r="11.6" fill="url(#cmp)"/>
<path d="M52 116L67.5 131M59.8 113.5V133.5M50 123.6H69.6" stroke="#e4eaf8" stroke-width="0.7" opacity="0.9"/></svg>
<span class="t" style="left:4.00px;top:14.10px;font-size:11.8px;line-height:11.8px;color:#7f8f3e;transform:scaleX(1.3302);transform-origin:0 50%;">EXPLORATORY</span>
<span class="t" style="left:16.80px;top:26.35px;font-size:11.3px;line-height:11.3px;color:#283a70;font-weight:700;transform:scaleX(1.4090);transform-origin:0 50%;">SOFTWARE</span>
<span class="t" style="left:28.30px;top:38.10px;font-size:11.8px;line-height:11.8px;color:#283a70;font-weight:700;transform:scaleX(1.3222);transform-origin:0 50%;">TESTING</span>
<span class="t" style="left:9.00px;top:57.40px;font-size:5.2px;line-height:5.2px;color:#f4f4ec;font-weight:700;transform:scaleX(1.0188);transform-origin:0 50%;text-shadow:0 0 1px #666;opacity:0.85;">TIPS, TRICKS, TOURS, AND TECHNIQUES</span>
<span class="t" style="left:30.00px;top:63.40px;font-size:5.2px;line-height:5.2px;color:#f4f4ec;font-weight:700;transform:scaleX(1.0489);transform-origin:0 50%;text-shadow:0 0 1px #666;opacity:0.85;">TO GUIDE TEST DESIGN</span>
<span class="t" style="left:26.50px;top:151.10px;font-size:4.8px;line-height:4.8px;color:#f8f8f4;font-weight:700;letter-spacing:1.154px;">JAMES A. WHITTAKER</span>
<svg style="left:112px;top:4px;" width="6" height="6" viewBox="0 0 6 6"><path d="M3 0.5L5.5 5H0.5Z" fill="#d8303c"/></svg>
</div>
<div style="left:29px;top:638px;width:122px;height:171px;background:#7c7c7c;border:1px solid #0c0c0c;"></div>
<div style="left:32px;top:641px;width:116px;height:165px;background:#0c0c0c;"></div>
<div class="clip" style="left:33px;top:642px;width:114px;height:163px;background:#ffffff;">
<div style="left:2.6000000000000227px;top:3.3999999999999773px;width:106.6px;height:160px;background:#9a9bd0;"></div>
<svg style="left:0px;top:0px;" width="114" height="163" viewBox="0 0 114 163"><g fill="none" stroke="#6c6ea6" stroke-width="1.5" opacity="0.9">
<ellipse cx="35" cy="18" rx="21" ry="5.5" fill="#a6a8d8"/><path d="M30 24L40 24L40 62L46 76L36 72L33 60Z" fill="#7476ac" stroke="none" opacity="0.55"/><path d="M28 22H42L40 30H30Z" fill="#5c5e94" stroke="none" opacity="0.7"/>
<path d="M27 23L31 32M35 24V33M43 23L39 32M29 27H41"/>
<path d="M33 33Q36 50 34 62Q38 72 50 78M39 33Q42 50 41 60Q46 70 56 74"/>
<path d="M40 100Q44 112 40 125M48 100Q56 115 52 125M30 110Q36 118 34 125"/>
<path d="M72 108Q86 100 100 104L110 100V125H72Z" fill="#8e90c6"/></g></svg>
<div style="left:90.5px;top:0px;width:23.5px;height:22px;background:#ffffff;"></div>
<span class="t" style="left:94.80px;top:10.20px;font-size:3.6px;line-height:3.6px;color:#333;font-weight:700;letter-spacing:0.002px;">Big Nerd</span>
<span class="t" style="left:96.80px;top:14.20px;font-size:3.6px;line-height:3.6px;color:#333;font-weight:700;letter-spacing:0.003px;">Ranch</span>
<svg style="left:98px;top:2.5px;" width="9" height="6" viewBox="0 0 9 6"><path d="M1 5Q2 2 4.5 2Q7 2 8 5M3 2.5L2.5 1M6 2.5L6.5 1" stroke="#555" stroke-width="0.6" fill="none"/></svg>
<div style="left:0px;top:70px;width:114px;height:22.5px;background:#e9712b;"></div>
<div style="left:43.19999999999999px;top:70px;width:25.5px;height:5px;background:#ffffff;"></div>
<span class="t" style="left:46.00px;top:71.60px;font-size:2.8px;line-height:2.8px;color:#444;font-weight:700;letter-spacing:0.207px;">2ND EDITION</span>
<span class="t" style="left:19.20px;top:76.70px;font-size:7.6px;line-height:7.6px;color:#ffffff;font-weight:700;letter-spacing:-0.410px;">Android Programming</span>
<span class="t" style="left:26.50px;top:85.55px;font-size:3.9px;line-height:3.9px;color:#4a2c14;font-weight:700;letter-spacing:0.107px;">THE BIG NERD RANCH GUIDE</span>
<span class="t" style="left:22.00px;top:95.40px;font-size:4.2px;line-height:4.2px;color:#f0f0fa;letter-spacing:-0.096px;">Bill Phillips, Chris Stewart, Brian Hardy</span>
<span class="t" style="left:39.00px;top:100.40px;font-size:4.2px;line-height:4.2px;color:#f0f0fa;letter-spacing:-0.109px;">&amp; Kristin Marsicano</span>
</div>
<div style="left:182px;top:657px;width:171px;height:133px;background:#7c7c7c;border:1px solid #0c0c0c;"></div>
<div style="left:185px;top:660px;width:165px;height:127px;background:#0c0c0c;"></div>
<div class="clip" style="left:186px;top:661px;width:163px;height:125px;background:#ffffff;">
<div style="left:6px;top:6.7000000000000455px;width:150px;height:120px;background:linear-gradient(#ffff8c 0%,#ffff94 22%,#f0f4c4 38%,#d2dcf8 50%,#c8d6fc 100%);filter:blur(0.6px);"></div>
<span class="t" style="left:12.00px;top:12.40px;font-size:9.2px;line-height:9.2px;color:#1a1a1a;font-weight:700;transform:scaleX(0.6254);transform-origin:0 50%;">A Tutorial in Exploratory Testing</span>
<span class="t" style="left:12.00px;top:22.10px;font-size:6.8px;line-height:6.8px;color:#1a1a1a;font-weight:700;transform:scaleX(0.6308);transform-origin:0 50%;">April 2008</span>
<span class="t" style="left:12.00px;top:36.30px;font-size:6.4px;line-height:6.4px;color:#222;font-weight:700;transform:scaleX(0.5602);transform-origin:0 50%;">Cem Kaner, J.D., Ph.D.</span>
<span class="t" style="left:12.00px;top:43.30px;font-size:6.4px;line-height:6.4px;color:#222;font-weight:700;transform:scaleX(0.5413);transform-origin:0 50%;">Professor of Software Engineering</span>
<span class="t" style="left:12.00px;top:50.30px;font-size:6.4px;line-height:6.4px;color:#222;font-weight:700;transform:scaleX(0.5629);transform-origin:0 50%;">Florida Institute of Technology</span>
<svg style="left:0px;top:0px;filter:blur(0.3px);" width="163" height="125" viewBox="0 0 163 125"><path d="M13.0 63.20H52.0" stroke="#334" stroke-width="1.3" stroke-dasharray="2.2 0.55 5.1 0.55 3.9 0.55 4.6 0.55 4.2 0.55 5.1 0.55 4.7 0.55 4.9 0.55 2.3 0.55" opacity="0.5"/><path d="M13.0 66.90H144.7" stroke="#334" stroke-width="1.3" stroke-dasharray="4.3 0.55 3.6 0.55 4.5 0.55 3.3 0.55 5.0 0.55 3.7 0.55 2.6 0.55 2.4 0.55 2.1 0.55 3.5 0.55 1.7 0.55 3.4 0.55 2.1 0.55 3.5 0.55 3.5 0.55 3.7 0.55 5.0 0.55 1.5 0.55 4.9 0.55 3.4 0.55 3.8 0.55 4.2 0.55 4.9 0.55 3.0 0.55 3.2 0.55 5.3 0.55 1.8 0.55 4.0 0.55 4.0 0.55 1.6 0.55 3.9 0.55 4.2 0.55 5.2 0.55" opacity="0.5"/><path d="M13.0 70.70H144.7" stroke="#334" stroke-width="1.3" stroke-dasharray="2.8 0.55 5.4 0.55 3.5 0.55 3.4 0.55 5.1 0.55 1.6 0.55 4.4 0.55 4.0 0.55 2.9 0.55 4.9 0.55 3.0 0.55 3.4 0.55 3.6 0.55 4.6 0.55 2.3 0.55 3.2 0.55 3.2 0.55 3.7 0.55 4.8 0.55 2.7 0.55 4.8 0.55 3.1 0.55 3.5 0.55 2.6 0.55 3.5 0.55 5.4 0.55 4.1 0.55 4.7 0.55 2.8 0.55 2.8 0.55 2.7 0.55 3.8 0.55" opacity="0.5"/><path d="M13.0 74.20H78.9" stroke="#334" stroke-width="1.3" stroke-dasharray="4.0 0.55 4.6 0.55 1.7 0.55 4.4 0.55 5.0 0.55 3.7 0.55 1.7 0.55 2.7 0.55 1.5 0.55 2.3 0.55 5.2 0.55 3.9 0.55 4.1 0.55 4.7 0.55 5.1 0.55 3.9 0.55" opacity="0.5"/><path d="M13.0 81.00H144.0" stroke="#334" stroke-width="1.3" stroke-dasharray="4.0 0.55 4.0 0.55 4.3 0.55 3.9 0.55 4.2 0.55 2.4 0.55 4.2 0.55 3.3 0.55 4.6 0.55 1.9 0.55 2.2 0.55 1.6 0.55 4.6 0.55 5.2 0.55 4.1 0.55 3.0 0.55 4.8 0.55 4.6 0.55 3.7 0.55 2.5 0.55 2.7 0.55 3.2 0.55 2.8 0.55 3.2 0.55 4.1 0.55 5.2 0.55 1.7 0.55 3.8 0.55 1.7 0.55 2.0 0.55 4.7 0.55 3.8 0.55 5.2 0.55" opacity="0.5"/><path d="M13.0 84.90H144.0" stroke="#334" stroke-width="1.3" stroke-dasharray="3.3 0.55 1.6 0.55 3.0 0.55 3.9 0.55 5.3 0.55 5.4 0.55 3.4 0.55 3.1 0.55 1.9 0.55 4.1 0.55 2.3 0.55 2.1 0.55 1.6 0.55 1.5 0.55 4.2 0.55 2.0 0.55 5.4 0.55 1.9 0.55 5.0 0.55 2.0 0.55 1.6 0.55 4.4 0.55 2.5 0.55 4.4 0.55 2.2 0.55 1.7 0.55 4.6 0.55 4.4 0.55 4.9 0.55 4.4 0.55 1.8 0.55 4.0 0.55 4.3 0.55 3.3 0.55 5.2 0.55" opacity="0.5"/><path d="M13.0 88.70H144.0" stroke="#334" stroke-width="1.3" stroke-dasharray="2.5 0.55 5.4 0.55 4.4 0.55 1.5 0.55 1.6 0.55 4.1 0.55 4.8 0.55 1.8 0.55 2.7 0.55 4.4 0.55 2.2 0.55 4.9 0.55 3.4 0.55 1.7 0.55 3.0 0.55 3.8 0.55 3.3 0.55 4.2 0.55 2.1 0.55 4.7 0.55 3.0 0.55 4.1 0.55 4.0 0.55 3.2 0.55 3.0 0.55 4.6 0.55 5.3 0.55 4.6 0.55 3.8 0.55 2.7 0.55 1.7 0.55 5.4 0.55 4.3 0.55" opacity="0.5"/><path d="M13.0 92.40H144.0" stroke="#334" stroke-width="1.3" stroke-dasharray="4.8 0.55 2.8 0.55 3.9 0.55 5.4 0.55 4.8 0.55 3.9 0.55 2.7 0.55 3.2 0.55 5.1 0.55 3.0 0.55 4.2 0.55 3.9 0.55 5.1 0.55 4.7 0.55 2.6 0.55 1.5 0.55 2.6 0.55 3.2 0.55 3.8 0.55 4.8 0.55 5.0 0.55 1.7 0.55 4.8 0.55 4.7 0.55 5.0 0.55 3.8 0.55 2.6 0.55 4.9 0.55 4.7 0.55 4.2 0.55" opacity="0.5"/><path d="M13.0 96.10H65.4" stroke="#334" stroke-width="1.3" stroke-dasharray="5.2 0.55 2.9 0.55 1.8 0.55 3.7 0.55 4.7 0.55 2.3 0.55 4.5 0.55 5.2 0.55 2.4 0.55 3.9 0.55 4.2 0.55 3.4 0.55 2.3 0.55" opacity="0.5"/><path d="M13.0 102.20H146.0" stroke="#334" stroke-width="1.3" stroke-dasharray="2.5 0.55 4.5 0.55 4.7 0.55 3.3 0.55 1.9 0.55 4.7 0.55 4.6 0.55 2.4 0.55 3.8 0.55 5.1 0.55 5.0 0.55 3.6 0.55 3.4 0.55 3.9 0.55 2.3 0.55 2.3 0.55 2.2 0.55 4.3 0.55 3.0 0.55 3.8 0.55 3.1 0.55 3.6 0.55 2.1 0.55 1.7 0.55 5.5 0.55 3.0 0.55 1.9 0.55 4.0 0.55 4.6 0.55 2.1 0.55 3.9 0.55 2.9 0.55 3.6 0.55 1.6 0.55" opacity="0.5"/><path d="M13.0 105.70H52.9" stroke="#334" stroke-width="1.3" stroke-dasharray="1.6 0.55 5.5 0.55 5.0 0.55 3.4 0.55 3.8 0.55 2.5 0.55 4.6 0.55 3.2 0.55 5.3 0.55 4.6 0.55" opacity="0.5"/></svg>
</div>
<div style="left:379px;top:638px;width:133px;height:171px;background:#7c7c7c;border:1px solid #0c0c0c;"></div>
<div style="left:382px;top:641px;width:127px;height:165px;background:#0c0c0c;"></div>
<div class="clip" style="left:383px;top:642px;width:125px;height:163px;background:#ffffff;">
<svg style="left:0px;top:0px;" width="125" height="163" viewBox="0 0 125 163"><path d="M0 0H125V33Q112 30 98 22Q88 17.5 70 17.3L0 17Z" fill="#1e7a5c"/>
<g transform="translate(100 25.7)"><path d="M20.30 0.00L17.42 2.50L19.48 5.72L16.01 7.31L17.08 10.98L13.30 11.53L13.29 15.34L9.52 14.81L8.43 18.47L4.96 16.89L2.89 20.09L0.00 17.60L-2.89 20.09L-4.96 16.89L-8.43 18.47L-9.52 14.81L-13.29 15.34L-13.30 11.53L-17.08 10.98L-16.01 7.31L-19.48 5.72L-17.42 2.50L-20.30 0.00L-17.42 -2.50L-19.48 -5.72L-16.01 -7.31L-17.08 -10.98L-13.30 -11.53L-13.29 -15.34L-9.52 -14.81L-8.43 -18.47L-4.96 -16.89L-2.89 -20.09L-0.00 -17.60L2.89 -20.09L4.96 -16.89L8.43 -18.47L9.52 -14.81L13.29 -15.34L13.30 -11.53L17.08 -10.98L16.01 -7.31L19.48 -5.72L17.42 -2.50Z" fill="#e9e1a4"/><circle r="16.2" fill="#efeff0"/><circle r="16.2" fill="none" stroke="#d8d0a0" stroke-width="0.6"/></g></svg>
<span class="t" style="left:88.35px;top:13.50px;font-size:7px;line-height:7px;color:#1c2230;font-weight:700;font-family:'Liberation Serif', serif;letter-spacing:0.228px;">Version</span>
<span class="t" style="left:93.75px;top:20.50px;font-size:7px;line-height:7px;color:#1c2230;font-weight:700;font-family:'Liberation Serif', serif;letter-spacing:0.406px;">8.11</span>
<span class="t" style="left:89.00px;top:30.10px;font-size:2.8px;line-height:2.8px;color:#333;font-weight:700;font-family:'Liberation Serif', serif;letter-spacing:0.059px;">Supports Through</span>
<span class="t" style="left:92.50px;top:34.10px;font-size:2.8px;line-height:2.8px;color:#333;font-weight:700;font-family:'Liberation Serif', serif;letter-spacing:0.159px;">Android 8.1</span>
<span class="t" style="left:6.00px;top:48.80px;font-size:9.4px;line-height:9.4px;color:#111;font-weight:700;transform:scaleX(0.9654);transform-origin:0 50%;">The Busy Coder&#x27;s Guide to</span>
<span class="t" style="left:4.20px;top:68.25px;font-size:31.5px;line-height:31.5px;color:#000;font-weight:700;letter-spacing:-0.519px;">Android</span>
<span class="t" style="left:5.40px;top:108.20px;font-size:16.6px;line-height:16.6px;color:#000;font-weight:700;transform:scaleX(1.0902);transform-origin:0 50%;">Development</span>
</div>
<div style="left:553px;top:638px;width:141px;height:171px;background:#7c7c7c;border:1px solid #0c0c0c;"></div>
<div style="left:556px;top:641px;width:135px;height:165px;background:#0c0c0c;"></div>
<div class="clip" style="left:557px;top:642px;width:133px;height:163px;background:#231f20;">
<svg style="left:4.399999999999977px;top:4.7999999999999545px;" width="8.4" height="8.4" viewBox="0 0 8.4 8.4"><circle cx="4.2" cy="4.2" r="4" fill="#f4f4f4"/><path d="M2.6 2.4L5.8 6M5.8 2.4L2.6 6" stroke="#231f20" stroke-width="0.9"/></svg>
<span class="t" style="left:14.30px;top:6.40px;font-size:5.2px;line-height:5.2px;color:#f4f4f4;font-weight:700;letter-spacing:-0.155px;">Xamarin</span>
<div style="left:96.5px;top:5.2000000000000455px;width:3px;height:3.2px;background:#f25022;"></div>
<div style="left:100px;top:5.2000000000000455px;width:3px;height:3.2px;background:#7fba00;"></div>
<div style="left:96.5px;top:8.799999999999955px;width:3px;height:3.2px;background:#00a4ef;"></div>
<div style="left:100px;top:8.799999999999955px;width:3px;height:3.2px;background:#ffb900;"></div>
<span class="t" style="left:105.00px;top:6.30px;font-size:5.4px;line-height:5.4px;color:#f4f4f4;font-weight:700;letter-spacing:-0.218px;">Microsoft</span>
<span class="t" style="left:5.20px;top:19.70px;font-size:13.6px;line-height:13.6px;color:#ededed;letter-spacing:-0.324px;">Creating</span>
<span class="t" style="left:5.20px;top:34.70px;font-size:13.6px;line-height:13.6px;color:#ededed;letter-spacing:-0.042px;">Mobile Apps</span>
<span class="t" style="left:5.20px;top:50.70px;font-size:13.6px;line-height:13.6px;color:#ededed;letter-spacing:-0.353px;">with Xamarin.Forms</span>
<div style="left:6px;top:72.20000000000005px;width:23.200000000000045px;height:46px;border:1px solid #5c5052;border-radius:3.5px;"></div>
<div style="left:8.299999999999955px;top:79.5px;width:18.90000000000009px;height:31.100000000000023px;background:linear-gradient(#a05cd0,#8e4cc0);"></div>
<div style="left:10px;top:98.20000000000005px;width:15.5px;height:2.6px;background:#f8f8f8;"></div>
<div style="left:8.299999999999955px;top:107.39999999999998px;width:18.90000000000009px;height:3.2px;background:#f8f8f8;"></div>
<div style="left:35.299999999999955px;top:72.20000000000005px;width:23.700000000000045px;height:46px;border:1px solid #5c5052;border-radius:3.5px;"></div>
<div style="left:37px;top:77.20000000000005px;width:21.299999999999955px;height:35.69999999999993px;background:#8edc38;"></div>
<div style="left:37px;top:77.20000000000005px;width:21.299999999999955px;height:4.2px;background:#f8f8f8;"></div>
<div style="left:40px;top:98px;width:15.5px;height:2.6px;background:#f8f8f8;"></div>
<div style="left:65.89999999999998px;top:72.20000000000005px;width:25.0px;height:46px;border:1px solid #5c5052;border-radius:3.5px;"></div>
<div style="left:69px;top:76.79999999999995px;width:20px;height:36.80000000000007px;background:#16a6ea;"></div>
<div style="left:70.70000000000005px;top:89.5px;width:16.299999999999955px;height:2.6px;background:#f8f8f8;"></div>
<div style="left:70.70000000000005px;top:93.70000000000005px;width:16.299999999999955px;height:2.6px;background:#f8f8f8;"></div>
<div style="left:70.70000000000005px;top:98.5px;width:16.299999999999955px;height:2.6px;background:#f8f8f8;"></div>
</div>
<div style="left:740px;top:638px;width:123px;height:171px;background:#7c7c7c;border:1px solid #0c0c0c;"></div>
<div style="left:743px;top:641px;width:117px;height:165px;background:#0c0c0c;"></div>
<div class="clip" style="left:744px;top:642px;width:115px;height:163px;background:#ffffff;">
<span class="t" style="left:13.40px;top:14.10px;font-size:4.8px;line-height:4.8px;color:#333;font-family:'Liberation Serif', serif;letter-spacing:-0.066px;">Appendices</span>
<span class="t" style="left:13.40px;top:22.10px;font-size:3.8px;line-height:3.8px;color:#444;font-family:'Liberation Serif', serif;letter-spacing:-0.100px;">Appendix A Copyright</span>
<div style="left:13.400000000000091px;top:25.200000000000045px;width:82px;height:0.6px;background:#aaa;"></div>
<svg style="left:0px;top:0px;filter:blur(0.3px);" width="115" height="163" viewBox="0 0 115 163"><path d="M13.4 33.70H34.6" stroke="#444" stroke-width="1.15" stroke-dasharray="4.8 0.55 5.4 0.55 2.5 0.55 1.7 0.55 2.3 0.55 2.2 0.55" opacity="0.36"/><path d="M13.4 37.00H101.0" stroke="#444" stroke-width="1.15" stroke-dasharray="1.8 0.55 1.7 0.55 3.7 0.55 5.0 0.55 3.3 0.55 5.3 0.55 5.1 0.55 1.8 0.55 3.9 0.55 3.1 0.55 2.0 0.55 5.3 0.55 2.5 0.55 3.8 0.55 4.1 0.55 5.3 0.55 4.2 0.55 3.1 0.55 3.3 0.55 2.1 0.55 5.4 0.55 5.5 0.55" opacity="0.36"/><path d="M13.4 40.10H101.0" stroke="#444" stroke-width="1.15" stroke-dasharray="2.4 0.55 1.7 0.55 2.5 0.55 2.9 0.55 5.1 0.55 5.1 0.55 4.8 0.55 1.7 0.55 4.6 0.55 4.3 0.55 4.1 0.55 5.4 0.55 1.7 0.55 2.1 0.55 4.5 0.55 5.3 0.55 4.2 0.55 2.7 0.55 3.9 0.55 4.5 0.55 1.9 0.55 2.8 0.55" opacity="0.36"/><path d="M13.4 42.80H101.0" stroke="#444" stroke-width="1.15" stroke-dasharray="2.5 0.55 2.0 0.55 3.4 0.55 2.2 0.55 2.5 0.55 2.1 0.55 4.2 0.55 1.6 0.55 4.4 0.55 2.3 0.55 1.6 0.55 5.2 0.55 2.4 0.55 5.2 0.55 5.0 0.55 5.1 0.55 2.1 0.55 3.3 0.55 1.9 0.55 5.2 0.55 4.9 0.55 4.0 0.55 3.3 0.55" opacity="0.36"/><path d="M13.4 45.50H76.5" stroke="#444" stroke-width="1.15" stroke-dasharray="2.9 0.55 4.8 0.55 3.4 0.55 4.0 0.55 2.1 0.55 2.4 0.55 1.7 0.55 4.4 0.55 3.7 0.55 2.1 0.55 5.0 0.55 2.6 0.55 3.1 0.55 2.1 0.55 2.6 0.55 4.9 0.55 2.8 0.55" opacity="0.36"/><path d="M13.4 49.50H101.5" stroke="#444" stroke-width="1.15" stroke-dasharray="2.2 0.55 3.5 0.55 2.8 0.55 5.1 0.55 2.0 0.55 5.4 0.55 1.7 0.55 5.1 0.55 4.2 0.55 2.3 0.55 3.4 0.55 2.6 0.55 2.5 0.55 2.3 0.55 3.0 0.55 5.5 0.55 5.5 0.55 5.2 0.55 1.9 0.55 2.7 0.55 5.1 0.55 1.7 0.55 4.4 0.55" opacity="0.36"/><path d="M13.4 52.20H31.0" stroke="#444" stroke-width="1.15" stroke-dasharray="2.7 0.55 5.4 0.55 1.6 0.55 4.7 0.55 2.9 0.55" opacity="0.36"/><path d="M16.0 58.00H55.9" stroke="#444" stroke-width="1.15" stroke-dasharray="2.1 0.55 1.5 0.55 4.8 0.55 3.6 0.55 2.2 0.55 3.2 0.55 5.1 0.55 2.4 0.55 3.8 0.55 2.1 0.55 2.2 0.55 4.6 0.55" opacity="0.36"/><path d="M16.0 62.40H51.0" stroke="#444" stroke-width="1.15" stroke-dasharray="4.3 0.55 2.3 0.55 1.8 0.55 1.8 0.55 3.9 0.55 3.5 0.55 2.6 0.55 2.3 0.55 3.9 0.55 4.3 0.55" opacity="0.36"/><path d="M16.0 67.00H51.0" stroke="#444" stroke-width="1.15" stroke-dasharray="4.7 0.55 3.8 0.55 2.3 0.55 1.8 0.55 4.4 0.55 3.1 0.55 4.4 0.55 1.7 0.55 4.7 0.55" opacity="0.36"/><path d="M13.4 75.40H43.0" stroke="#444" stroke-width="1.15" stroke-dasharray="2.8 0.55 4.9 0.55 5.0 0.55 3.5 0.55 1.6 0.55 5.1 0.55 3.4 0.55" opacity="0.36"/><path d="M13.4 79.00H44.5" stroke="#444" stroke-width="1.15" stroke-dasharray="5.0 0.55 2.6 0.55 2.2 0.55 4.8 0.55 3.0 0.55 2.2 0.55 3.0 0.55 3.9 0.55 1.5 0.55" opacity="0.36"/><path d="M15.7 83.60H77.0" stroke="#444" stroke-width="1.15" stroke-dasharray="3.6 0.55 3.3 0.55 3.6 0.55 2.0 0.55 4.4 0.55 4.8 0.55 5.0 0.55 2.8 0.55 4.3 0.55 3.0 0.55 4.5 0.55 1.7 0.55 5.0 0.55 5.3 0.55 3.5 0.55" opacity="0.36"/><path d="M21.0 88.30H97.0" stroke="#444" stroke-width="1.15" stroke-dasharray="3.6 0.55 3.6 0.55 3.6 0.55 1.6 0.55 5.4 0.55 2.4 0.55 2.2 0.55 1.9 0.55 2.5 0.55 4.8 0.55 1.6 0.55 1.9 0.55 4.3 0.55 2.3 0.55 1.6 0.55 3.9 0.55 3.8 0.55 3.6 0.55 4.3 0.55 1.9 0.55 5.0 0.55" opacity="0.36"/><path d="M21.0 91.30H43.8" stroke="#444" stroke-width="1.15" stroke-dasharray="4.4 0.55 1.7 0.55 2.0 0.55 3.5 0.55 3.5 0.55 2.6 0.55 2.0 0.55" opacity="0.36"/><path d="M21.0 95.90H69.8" stroke="#444" stroke-width="1.15" stroke-dasharray="3.1 0.55 2.0 0.55 3.9 0.55 4.9 0.55 2.1 0.55 3.8 0.55 4.5 0.55 2.2 0.55 4.8 0.55 5.3 0.55 3.1 0.55 3.2 0.55" opacity="0.36"/><path d="M21.0 100.70H101.0" stroke="#444" stroke-width="1.15" stroke-dasharray="4.9 0.55 3.6 0.55 3.1 0.55 5.3 0.55 4.6 0.55 2.9 0.55 2.5 0.55 2.8 0.55 3.2 0.55 5.4 0.55 4.7 0.55 5.2 0.55 4.8 0.55 4.9 0.55 1.7 0.55 3.6 0.55 5.3 0.55 5.2 0.55" opacity="0.36"/><path d="M21.0 103.80H45.0" stroke="#444" stroke-width="1.15" stroke-dasharray="2.5 0.55 3.2 0.55 4.0 0.55 3.0 0.55 3.6 0.55 1.8 0.55 3.2 0.55" opacity="0.36"/><path d="M16.0 108.30H99.0" stroke="#444" stroke-width="1.15" stroke-dasharray="3.5 0.55 1.6 0.55 2.1 0.55 5.4 0.55 4.6 0.55 5.2 0.55 4.0 0.55 4.7 0.55 5.0 0.55 5.0 0.55 1.6 0.55 4.1 0.55 2.6 0.55 4.2 0.55 2.6 0.55 3.7 0.55 5.2 0.55 4.0 0.55 2.5 0.55 3.6 0.55" opacity="0.36"/><path d="M16.0 111.00H53.3" stroke="#444" stroke-width="1.15" stroke-dasharray="3.2 0.55 5.3 0.55 2.7 0.55 2.7 0.55 4.1 0.55 2.0 0.55 3.9 0.55 5.3 0.55 3.6 0.55" opacity="0.36"/><path d="M19.2 114.80H97.6" stroke="#444" stroke-width="1.15" stroke-dasharray="2.6 0.55 3.4 0.55 3.6 0.55 2.1 0.55 2.0 0.55 2.0 0.55 2.7 0.55 3.1 0.55 2.7 0.55 2.5 0.55 1.9 0.55 3.7 0.55 4.9 0.55 3.9 0.55 3.8 0.55 4.1 0.55 2.3 0.55 4.3 0.55 3.3 0.55 3.7 0.55 4.0 0.55 3.4 0.55" opacity="0.36"/><path d="M19.2 117.70H97.6" stroke="#444" stroke-width="1.15" stroke-dasharray="2.7 0.55 2.5 0.55 2.4 0.55 3.5 0.55 3.0 0.55 3.8 0.55 1.5 0.55 2.9 0.55 4.9 0.55 2.5 0.55 3.7 0.55 3.5 0.55 2.6 0.55 5.5 0.55 2.7 0.55 4.6 0.55 2.1 0.55 1.8 0.55 5.0 0.55 3.3 0.55 1.7 0.55 3.1 0.55" opacity="0.36"/><path d="M19.2 120.50H93.7" stroke="#444" stroke-width="1.15" stroke-dasharray="3.3 0.55 4.4 0.55 1.9 0.55 2.4 0.55 5.3 0.55 4.5 0.55 2.1 0.55 2.8 0.55 2.9 0.55 4.2 0.55 4.0 0.55 4.9 0.55 4.8 0.55 3.6 0.55 4.5 0.55 4.5 0.55 4.5 0.55 3.4 0.55" opacity="0.36"/></svg>
</div>
</div>
</body></html>
